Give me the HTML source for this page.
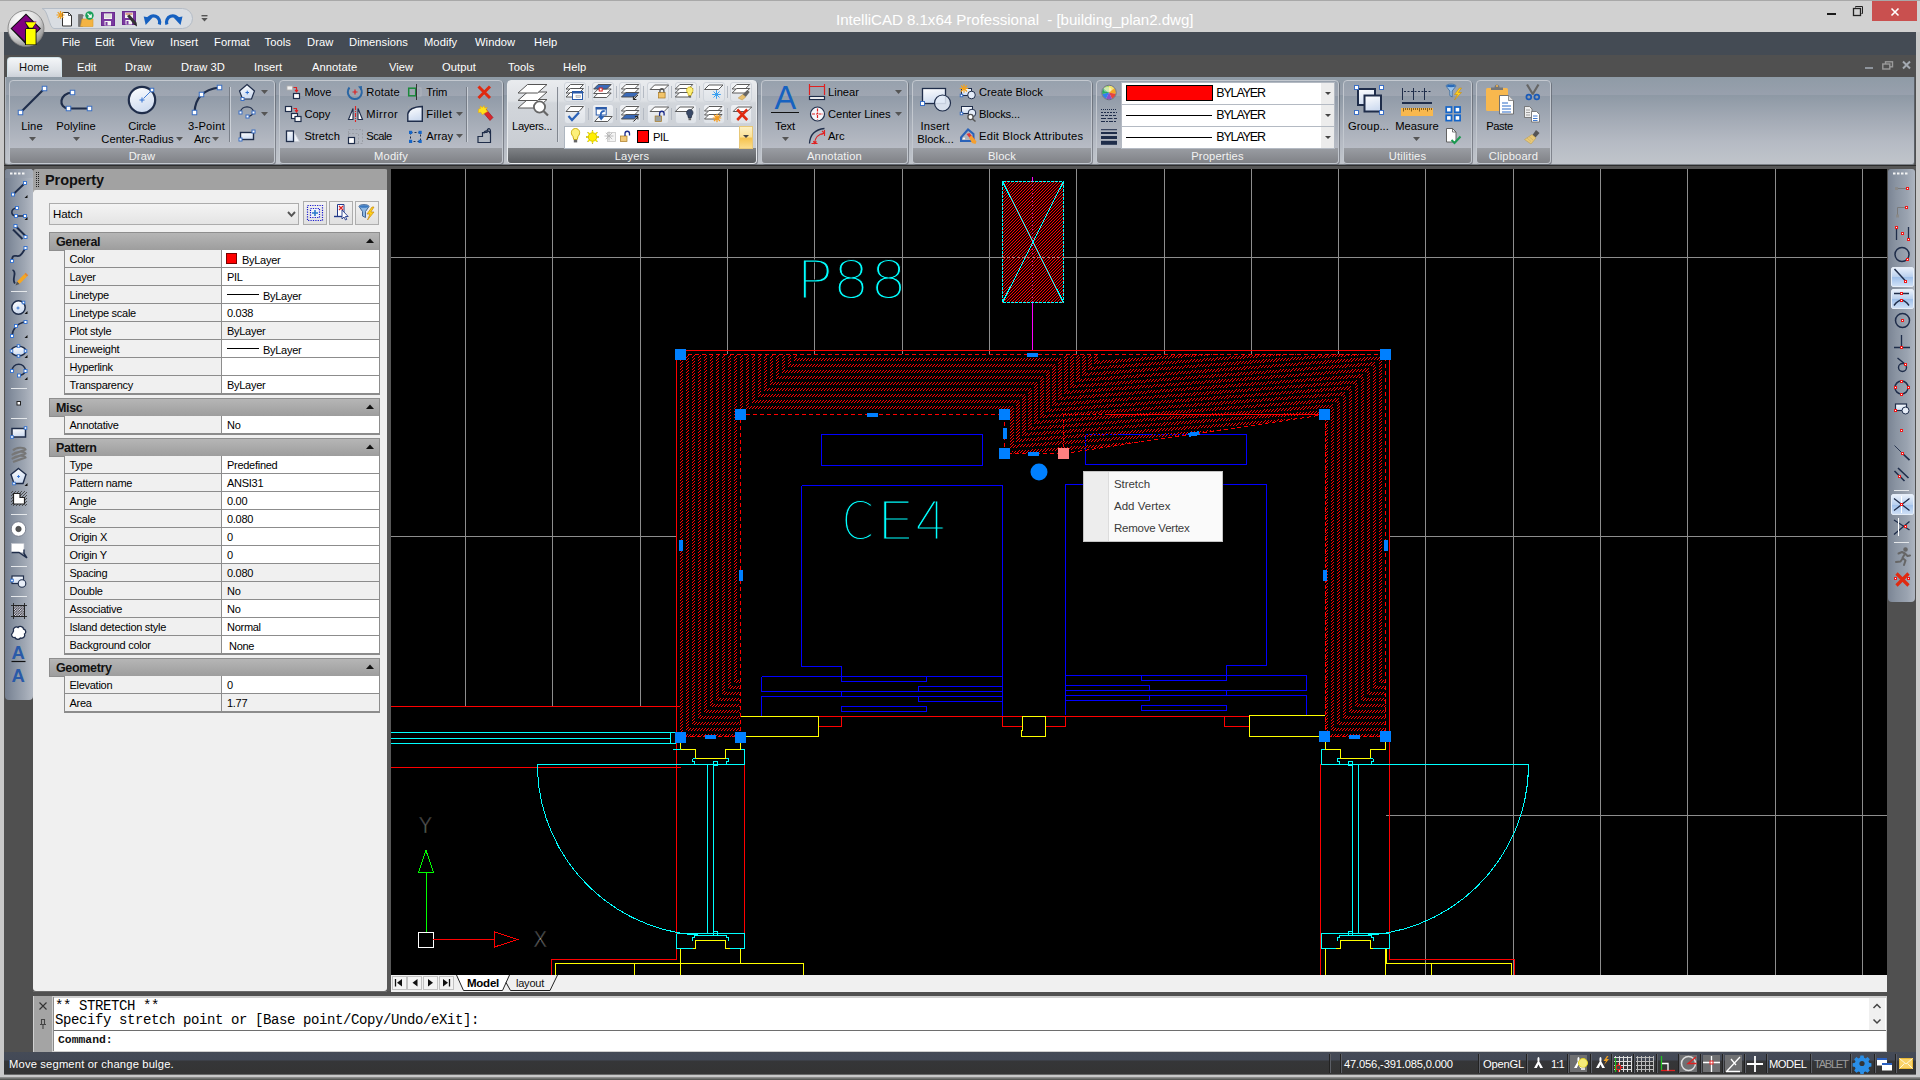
<!DOCTYPE html>
<html><head><meta charset="utf-8"><title>IntelliCAD</title>
<style>
html,body{margin:0;padding:0;background:#505050;overflow:hidden}
body{width:1920px;height:1080px;position:relative;font-family:"Liberation Sans",sans-serif;font-size:12px;color:#000}
div{position:absolute;box-sizing:border-box}
svg{position:absolute;overflow:visible}
.t{white-space:nowrap;line-height:14px;height:14px}
.w{color:#fff}
.mono{font-family:"Liberation Mono",monospace}
.mi{font-size:11.2px;letter-spacing:0.05px}
.cmd{font-family:"Liberation Mono",monospace;font-size:14px;letter-spacing:-0.4px;line-height:15px;height:15px;color:#000;white-space:pre}
</style></head>
<body>
<div style="left:0px;top:0px;width:1920px;height:1080px;background:#c9c9c9"></div>
<div style="left:0px;top:1077px;width:1920px;height:3px;background:linear-gradient(#9a9a9a,#4a4c48)"></div>
<div style="left:4px;top:165px;width:1912px;height:887px;background:#505050"></div>
<div style="left:0px;top:0px;width:1920px;height:32px;background:#d1d1d1"></div>
<div style="left:0px;top:0px;width:1920px;height:1px;background:#a8a8a8"></div>
<div class="t" style="left:836px;top:11.5px;color:#fff;font-size:15.1px;line-height:16px;height:16px;letter-spacing:-0.03px">IntelliCAD 8.1x64 Professional&nbsp; - [building_plan2.dwg]</div>
<div style="left:1827px;top:13px;width:9px;height:2px;background:#1a1a1a"></div>
<svg style="left:1852px;top:5px" width="12" height="12" viewBox="0 0 12 12"><path d="M3.5 2.5V1.5H10.5V8.5H9.5" fill="none" stroke="#222" stroke-width="1"/><rect x="1.5" y="3.5" width="7" height="7" fill="none" stroke="#222" stroke-width="1.3"/></svg>
<div style="left:1872px;top:1px;width:45px;height:20px;background:#c9504f"></div>
<svg style="left:1891px;top:7.500px" width="8" height="8" viewBox="0 0 8 8"><path d="M0.500 0.500L7.500 7.500M7.500 0.500L0.500 7.500" stroke="#fff" stroke-width="1.600"/></svg>
<div style="left:4px;top:32px;width:1912px;height:23px;background:#444b54"></div>
<div class="t mi" style="left:62px;top:35px;color:#fff;">File</div>
<div class="t mi" style="left:95px;top:35px;color:#fff;">Edit</div>
<div class="t mi" style="left:130px;top:35px;color:#fff;">View</div>
<div class="t mi" style="left:170px;top:35px;color:#fff;">Insert</div>
<div class="t mi" style="left:214px;top:35px;color:#fff;">Format</div>
<div class="t mi" style="left:264.5px;top:35px;color:#fff;">Tools</div>
<div class="t mi" style="left:307px;top:35px;color:#fff;">Draw</div>
<div class="t mi" style="left:349px;top:35px;color:#fff;">Dimensions</div>
<div class="t mi" style="left:424px;top:35px;color:#fff;">Modify</div>
<div class="t mi" style="left:475px;top:35px;color:#fff;">Window</div>
<div class="t mi" style="left:534px;top:35px;color:#fff;">Help</div>
<div style="left:4px;top:55px;width:1912px;height:22px;background:#505050"></div>
<div style="left:7px;top:57px;width:55px;height:21px;background:linear-gradient(#f4f6f8,#dfe3e8 60%,#c9ced6);border-radius:4px 4px 0 0;border:1px solid #cfe0e6;border-bottom:none"></div>
<div class="t mi" style="left:19px;top:60px;color:#111">Home</div>
<div class="t mi" style="left:77px;top:60px;color:#fff">Edit</div>
<div class="t mi" style="left:125px;top:60px;color:#fff">Draw</div>
<div class="t mi" style="left:181px;top:60px;color:#fff">Draw 3D</div>
<div class="t mi" style="left:254px;top:60px;color:#fff">Insert</div>
<div class="t mi" style="left:312px;top:60px;color:#fff">Annotate</div>
<div class="t mi" style="left:389px;top:60px;color:#fff">View</div>
<div class="t mi" style="left:442px;top:60px;color:#fff">Output</div>
<div class="t mi" style="left:508px;top:60px;color:#fff">Tools</div>
<div class="t mi" style="left:563px;top:60px;color:#fff">Help</div>
<div style="left:1865px;top:67px;width:8px;height:2px;background:#8e949c"></div>
<svg style="left:1882px;top:61px" width="12" height="10" viewBox="0 0 12 10"><rect x="3.5" y="0.8" width="7" height="5" fill="none" stroke="#9a9a9a" stroke-width="1.4"/><rect x="0.8" y="3" width="7" height="5" fill="#505050" stroke="#9a9a9a" stroke-width="1.4"/></svg>
<svg style="left:1902px;top:61px" width="9" height="8" viewBox="0 0 9 8"><path d="M1 0.500L8 7.500M8 0.500L1 7.500" stroke="#a4aab2" stroke-width="2"/></svg>
<svg style="left:40px;top:6px" width="170" height="26" viewBox="0 0 170 26"><path d="M2 2.5 H142.500 a10 10 0 0 1 0 20 H14 C9 22.500 8 3 2 2.500Z" fill="#d9dde2" stroke="#b4bcc6" stroke-width="1"/></svg>
<svg style="left:201px;top:15px" width="8" height="8" viewBox="0 0 8 8"><rect x="0.500" y="0" width="6" height="1.4" fill="#555"/><path d="M0.3 3H6.7L3.5 6.500Z" fill="#555"/></svg>
<svg style="left:54px;top:9px" width="140" height="20" viewBox="0 0 140 20">
<!-- new -->
<path d="M8.5 3.500h6l3 3v10.500h-9z" fill="#fff" stroke="#333" stroke-width="1"/><path d="M14.500 3.500v3h3" fill="none" stroke="#333" stroke-width="0.800"/>
<path d="M6.500 2v8M2.500 6h8M3.700 3.200l5.600 5.600M9.300 3.200l-5.600 5.600" stroke="#f0a020" stroke-width="1.200"/>
<!-- open -->
<path d="M24.500 17.500v-12h4l1 1.500h-1v10.500z" fill="#777" stroke="#666" stroke-width="0.6"/><path d="M26.500 17.500l1.500-7.500h11v7.500z" fill="#f4b443" stroke="#d89a28" stroke-width="0.600"/>
<circle cx="35.500" cy="6.500" r="4.200" fill="#19a05a"/><path d="M33.500 4.500l3.500 3.500M37.200 5.200v3h-3" stroke="#fff" stroke-width="1.200" fill="none"/>
<!-- save -->
<rect x="47.500" y="3.500" width="13" height="13" fill="#7a3aa0" stroke="#6a2a90" stroke-width="1"/><rect x="50" y="4.500" width="8" height="5.500" fill="#f4f4f4"/><path d="M50.500 6h7M50.500 8h7" stroke="#bbb" stroke-width="0.800"/><rect x="50.500" y="12" width="6.500" height="4.500" fill="#f4f4f4"/><rect x="51.500" y="13" width="2" height="3.500" fill="#7a3aa0"/>
<!-- save as -->
<rect x="68.500" y="2.500" width="13" height="13" fill="#7a3aa0" stroke="#6a2a90" stroke-width="1"/><rect x="71" y="3.500" width="8" height="5.500" fill="#f4f4f4"/><path d="M71.500 5h7" stroke="#c0502a" stroke-width="1"/><rect x="71.500" y="11" width="6.500" height="4.500" fill="#f4f4f4"/><rect x="72.500" y="12" width="2" height="3.500" fill="#7a3aa0"/>
<path d="M73 7l7 8.500 2.500-2-7-8z" fill="#333"/><path d="M80 15.500l3 2-0.500-4z" fill="#222"/>
<!-- undo -->
<path d="M105.300 15.500A6.300 6.300 0 0 0 93.500 11" fill="none" stroke="#1560c0" stroke-width="3.200"/><path d="M89.700 7.500l8.500 1.500-6.500 7z" fill="#1560c0"/>
<!-- redo -->
<path d="M112.900 15.500A6.300 6.300 0 0 1 124.700 11" fill="none" stroke="#1560c0" stroke-width="3.200"/><path d="M128.500 7.500l-8.500 1.500 6.500 7z" fill="#1560c0"/>
</svg>
<svg style="left:6px;top:8px" width="40" height="40" viewBox="0 0 40 40">
<defs><radialGradient id="lg" cx="0.35" cy="0.25" r="0.9"><stop offset="0" stop-color="#ffffff"/><stop offset="0.55" stop-color="#d8d8d8"/><stop offset="1" stop-color="#6c6c6c"/></radialGradient></defs>
<circle cx="20" cy="20.500" r="18" fill="url(#lg)" stroke="#7a7a7a" stroke-width="0.800"/>
<path d="M20 5.500L35 20.500L30.500 25V37H19V35.500L4.500 20.500Z" fill="#111"/>
<path d="M20 7L33.500 20.500L30.500 23.500V20.500H27L30.500 13.500H18.500L21.500 19.500L19 21V33L6 20.500Z" fill="#800080"/>
<path d="M19.500 14.200h10.800l-3.800 5.600h-3.200z" fill="#ffff00"/><rect x="20" y="21" width="9.600" height="15.400" fill="#ffff00"/>
</svg>
<div style="left:4px;top:77px;width:1912px;height:89px;background:#505050"></div>
<div style="left:5px;top:77px;width:1910px;height:88px;background:linear-gradient(#8f9ba6 0,#98a0ad 17.500px,#8e99a5 18.500px,#a3aab5 42px,#b6bbc4 66px,#c1c5cb 88px);border:0;border-right:1px solid #5c6168;border-bottom:1px solid #7c8188;border-left:1px solid #aeb4bc;border-radius:0 0 3px 3px"></div>
<div style="left:4px;top:165px;width:1912px;height:1px;background:#2c2c2c"></div>
<div style="left:4px;top:166px;width:1912px;height:3px;background:#565656"></div>
<div style="left:9px;top:80px;width:266px;height:84px;background:linear-gradient(#97a1ad 0,#9fa6b2 14.500px,#919ba8 15.500px,#a4abb6 40px,#b8bcc5 67px);border:1px solid #c3c8cf;border-radius:4px;box-shadow:1px 1px 0 rgba(80,84,92,0.55)"></div>
<div style="left:10px;top:148px;width:264px;height:15px;background:linear-gradient(#9a9da3,#808287);border-radius:0 0 3px 3px"></div>
<div class="t" style="left:128.63px;top:149px;font-size:11.2px;letter-spacing:0.150px;color:#f2f2f2;line-height:14px;height:14px;">Draw</div>
<div style="left:279px;top:80px;width:224px;height:84px;background:linear-gradient(#97a1ad 0,#9fa6b2 14.500px,#919ba8 15.500px,#a4abb6 40px,#b8bcc5 67px);border:1px solid #c3c8cf;border-radius:4px;box-shadow:1px 1px 0 rgba(80,84,92,0.55)"></div>
<div style="left:280px;top:148px;width:222px;height:15px;background:linear-gradient(#9a9da3,#808287);border-radius:0 0 3px 3px"></div>
<div class="t" style="left:374.06px;top:149px;font-size:11.2px;letter-spacing:0.150px;color:#f2f2f2;line-height:14px;height:14px;">Modify</div>
<div style="left:507px;top:80px;width:250px;height:84px;background:linear-gradient(#e9ebee 0,#dde0e4 20px,#d2d6db 22px,#c9cdd3 66px);border:1px solid #e8ebee;border-radius:4px;box-shadow:1px 1px 0 rgba(80,84,92,0.55)"></div>
<div style="left:508px;top:148px;width:248px;height:15px;background:linear-gradient(#808387,#595c60);border-radius:0 0 3px 3px"></div>
<div class="t" style="left:614.74px;top:149px;font-size:11.2px;letter-spacing:0.150px;color:#f2f2f2;line-height:14px;height:14px;">Layers</div>
<div style="left:761px;top:80px;width:147px;height:84px;background:linear-gradient(#97a1ad 0,#9fa6b2 14.500px,#919ba8 15.500px,#a4abb6 40px,#b8bcc5 67px);border:1px solid #c3c8cf;border-radius:4px;box-shadow:1px 1px 0 rgba(80,84,92,0.55)"></div>
<div style="left:762px;top:148px;width:145px;height:15px;background:linear-gradient(#9a9da3,#808287);border-radius:0 0 3px 3px"></div>
<div class="t" style="left:806.97px;top:149px;font-size:11.2px;letter-spacing:0.150px;color:#f2f2f2;line-height:14px;height:14px;">Annotation</div>
<div style="left:912px;top:80px;width:180px;height:84px;background:linear-gradient(#97a1ad 0,#9fa6b2 14.500px,#919ba8 15.500px,#a4abb6 40px,#b8bcc5 67px);border:1px solid #c3c8cf;border-radius:4px;box-shadow:1px 1px 0 rgba(80,84,92,0.55)"></div>
<div style="left:913px;top:148px;width:178px;height:15px;background:linear-gradient(#9a9da3,#808287);border-radius:0 0 3px 3px"></div>
<div class="t" style="left:987.93px;top:149px;font-size:11.2px;letter-spacing:0.150px;color:#f2f2f2;line-height:14px;height:14px;">Block</div>
<div style="left:1096px;top:80px;width:243px;height:84px;background:linear-gradient(#97a1ad 0,#9fa6b2 14.500px,#919ba8 15.500px,#a4abb6 40px,#b8bcc5 67px);border:1px solid #c3c8cf;border-radius:4px;box-shadow:1px 1px 0 rgba(80,84,92,0.55)"></div>
<div style="left:1097px;top:148px;width:241px;height:15px;background:linear-gradient(#9a9da3,#808287);border-radius:0 0 3px 3px"></div>
<div class="t" style="left:1191.23px;top:149px;font-size:11.2px;letter-spacing:0.150px;color:#f2f2f2;line-height:14px;height:14px;">Properties</div>
<div style="left:1343px;top:80px;width:129px;height:84px;background:linear-gradient(#97a1ad 0,#9fa6b2 14.500px,#919ba8 15.500px,#a4abb6 40px,#b8bcc5 67px);border:1px solid #c3c8cf;border-radius:4px;box-shadow:1px 1px 0 rgba(80,84,92,0.55)"></div>
<div style="left:1344px;top:148px;width:127px;height:15px;background:linear-gradient(#9a9da3,#808287);border-radius:0 0 3px 3px"></div>
<div class="t" style="left:1388.78px;top:149px;font-size:11.2px;letter-spacing:0.150px;color:#f2f2f2;line-height:14px;height:14px;">Utilities</div>
<div style="left:1476px;top:80px;width:75px;height:84px;background:linear-gradient(#97a1ad 0,#9fa6b2 14.500px,#919ba8 15.500px,#a4abb6 40px,#b8bcc5 67px);border:1px solid #c3c8cf;border-radius:4px;box-shadow:1px 1px 0 rgba(80,84,92,0.55)"></div>
<div style="left:1477px;top:148px;width:73px;height:15px;background:linear-gradient(#9a9da3,#808287);border-radius:0 0 3px 3px"></div>
<div class="t" style="left:1488.85px;top:149px;font-size:11.2px;letter-spacing:0.150px;color:#f2f2f2;line-height:14px;height:14px;">Clipboard</div>
<div class="t" style="left:21.25px;top:119px;font-size:11.2px;letter-spacing:0.081px;color:#000;line-height:14px;height:14px;">Line</div>
<svg style="left:28.5px;top:137px" width="7" height="4" viewBox="0 0 7 4"><path d="M0 0H7L3.5 4Z" fill="#555"/></svg>
<div class="t" style="left:56.25px;top:119px;font-size:11.2px;letter-spacing:0.035px;color:#000;line-height:14px;height:14px;">Polyline</div>
<svg style="left:72.5px;top:137px" width="7" height="4" viewBox="0 0 7 4"><path d="M0 0H7L3.5 4Z" fill="#555"/></svg>
<div class="t" style="left:128.25px;top:119px;font-size:11.2px;letter-spacing:-0.187px;color:#000;line-height:14px;height:14px;">Circle</div>
<div class="t" style="left:101.30px;top:132px;font-size:11.2px;letter-spacing:0.014px;color:#000;line-height:14px;height:14px;">Center-Radius</div>
<svg style="left:176.0px;top:137px" width="7" height="4" viewBox="0 0 7 4"><path d="M0 0H7L3.5 4Z" fill="#555"/></svg>
<div class="t" style="left:188.00px;top:119px;font-size:11.2px;letter-spacing:0.216px;color:#000;line-height:14px;height:14px;">3-Point</div>
<div class="t" style="left:194.00px;top:132px;font-size:11.2px;letter-spacing:-0.267px;color:#000;line-height:14px;height:14px;">Arc</div>
<svg style="left:212.0px;top:137px" width="7" height="4" viewBox="0 0 7 4"><path d="M0 0H7L3.5 4Z" fill="#555"/></svg>
<div style="left:229px;top:87px;width:2px;height:55px;background:linear-gradient(90deg,rgba(110,116,126,0.8) 50%,rgba(220,224,230,0.7) 50%)"></div>
<svg style="left:261.0px;top:90px" width="7" height="4" viewBox="0 0 7 4"><path d="M0 0H7L3.5 4Z" fill="#555"/></svg>
<svg style="left:261.0px;top:112px" width="7" height="4" viewBox="0 0 7 4"><path d="M0 0H7L3.5 4Z" fill="#555"/></svg>
<div class="t" style="left:304.40px;top:85px;font-size:11.2px;letter-spacing:-0.097px;color:#000;line-height:14px;height:14px;">Move</div>
<div class="t" style="left:304.40px;top:107px;font-size:11.2px;letter-spacing:-0.037px;color:#000;line-height:14px;height:14px;">Copy</div>
<div class="t" style="left:304.40px;top:129px;font-size:11.2px;letter-spacing:0.003px;color:#000;line-height:14px;height:14px;">Stretch</div>
<div class="t" style="left:366.30px;top:85px;font-size:11.2px;letter-spacing:0.084px;color:#000;line-height:14px;height:14px;">Rotate</div>
<div class="t" style="left:366.30px;top:107px;font-size:11.2px;letter-spacing:0.460px;color:#000;line-height:14px;height:14px;">Mirror</div>
<div class="t" style="left:366.30px;top:129px;font-size:11.2px;letter-spacing:-0.503px;color:#000;line-height:14px;height:14px;">Scale</div>
<div class="t" style="left:426.20px;top:85px;font-size:11.2px;letter-spacing:-0.294px;color:#000;line-height:14px;height:14px;">Trim</div>
<div class="t" style="left:426.20px;top:107px;font-size:11.2px;letter-spacing:0.392px;color:#000;line-height:14px;height:14px;">Fillet</div>
<div class="t" style="left:426.20px;top:129px;font-size:11.2px;letter-spacing:0.048px;color:#000;line-height:14px;height:14px;">Array</div>
<svg style="left:456.0px;top:112px" width="7" height="4" viewBox="0 0 7 4"><path d="M0 0H7L3.5 4Z" fill="#555"/></svg>
<svg style="left:456.0px;top:134px" width="7" height="4" viewBox="0 0 7 4"><path d="M0 0H7L3.5 4Z" fill="#555"/></svg>
<div style="left:466px;top:87px;width:2px;height:55px;background:linear-gradient(90deg,rgba(110,116,126,0.8) 50%,rgba(220,224,230,0.7) 50%)"></div>
<div class="t" style="left:512.00px;top:119px;font-size:11.2px;letter-spacing:-0.328px;color:#000;line-height:14px;height:14px;">Layers...</div>
<div style="left:557px;top:87px;width:2px;height:55px;background:linear-gradient(90deg,rgba(110,116,126,0.8) 50%,rgba(220,224,230,0.7) 50%)"></div>
<div style="left:564.0px;top:82px;width:22px;height:19.5px;background:linear-gradient(#eef0f3,#dfe3e8);border:1px solid #cfd4db;border-radius:3px"></div>
<div style="left:591.7px;top:82px;width:22px;height:19.5px;background:linear-gradient(#eef0f3,#dfe3e8);border:1px solid #cfd4db;border-radius:3px"></div>
<div style="left:619.4px;top:82px;width:22px;height:19.5px;background:linear-gradient(#eef0f3,#dfe3e8);border:1px solid #cfd4db;border-radius:3px"></div>
<div style="left:647.1px;top:82px;width:22px;height:19.5px;background:linear-gradient(#eef0f3,#dfe3e8);border:1px solid #cfd4db;border-radius:3px"></div>
<div style="left:674.8px;top:82px;width:22px;height:19.5px;background:linear-gradient(#eef0f3,#dfe3e8);border:1px solid #cfd4db;border-radius:3px"></div>
<div style="left:702.5px;top:82px;width:22px;height:19.5px;background:linear-gradient(#eef0f3,#dfe3e8);border:1px solid #cfd4db;border-radius:3px"></div>
<div style="left:730.2px;top:82px;width:22px;height:19.5px;background:linear-gradient(#eef0f3,#dfe3e8);border:1px solid #cfd4db;border-radius:3px"></div>
<div style="left:588.0px;top:86px;width:1px;height:11.5px;background:#b4bac3"></div>
<div style="left:615.7px;top:86px;width:1px;height:11.5px;background:#b4bac3"></div>
<div style="left:643.4px;top:86px;width:1px;height:11.5px;background:#b4bac3"></div>
<div style="left:671.1px;top:86px;width:1px;height:11.5px;background:#b4bac3"></div>
<div style="left:698.8px;top:86px;width:1px;height:11.5px;background:#b4bac3"></div>
<div style="left:726.5px;top:86px;width:1px;height:11.5px;background:#b4bac3"></div>
<div style="left:564.0px;top:104px;width:22px;height:19.5px;background:linear-gradient(#eef0f3,#dfe3e8);border:1px solid #cfd4db;border-radius:3px"></div>
<div style="left:591.7px;top:104px;width:22px;height:19.5px;background:linear-gradient(#eef0f3,#dfe3e8);border:1px solid #cfd4db;border-radius:3px"></div>
<div style="left:619.4px;top:104px;width:22px;height:19.5px;background:linear-gradient(#eef0f3,#dfe3e8);border:1px solid #cfd4db;border-radius:3px"></div>
<div style="left:647.1px;top:104px;width:22px;height:19.5px;background:linear-gradient(#eef0f3,#dfe3e8);border:1px solid #cfd4db;border-radius:3px"></div>
<div style="left:674.8px;top:104px;width:22px;height:19.5px;background:linear-gradient(#eef0f3,#dfe3e8);border:1px solid #cfd4db;border-radius:3px"></div>
<div style="left:702.5px;top:104px;width:22px;height:19.5px;background:linear-gradient(#eef0f3,#dfe3e8);border:1px solid #cfd4db;border-radius:3px"></div>
<div style="left:730.2px;top:104px;width:22px;height:19.5px;background:linear-gradient(#eef0f3,#dfe3e8);border:1px solid #cfd4db;border-radius:3px"></div>
<div style="left:588.0px;top:108px;width:1px;height:11.5px;background:#b4bac3"></div>
<div style="left:615.7px;top:108px;width:1px;height:11.5px;background:#b4bac3"></div>
<div style="left:643.4px;top:108px;width:1px;height:11.5px;background:#b4bac3"></div>
<div style="left:671.1px;top:108px;width:1px;height:11.5px;background:#b4bac3"></div>
<div style="left:698.8px;top:108px;width:1px;height:11.5px;background:#b4bac3"></div>
<div style="left:726.5px;top:108px;width:1px;height:11.5px;background:#b4bac3"></div>
<div style="left:564px;top:125.5px;width:189px;height:23px;background:#fff;border:1px solid #aeb6c0"></div>
<div style="left:739px;top:125.5px;width:14px;height:23px;background:linear-gradient(#fdf1c4,#fbe29a 45%,#f5c451 55%,#fbdc8c);border:1px solid #e8c878"></div>
<svg style="left:743px;top:135px" width="6" height="3" viewBox="0 0 6 3"><path d="M0 0H6L3 3Z" fill="#444"/></svg>
<div style="left:637px;top:130px;width:12px;height:12.5px;background:#f00;border:1px solid #000"></div>
<div class="t" style="left:653.00px;top:130px;font-size:11.2px;letter-spacing:-0.437px;color:#000;line-height:14px;height:14px;">PIL</div>
<div class="t" style="left:775.00px;top:119px;font-size:11.2px;letter-spacing:-0.135px;color:#000;line-height:14px;height:14px;">Text</div>
<svg style="left:781.5px;top:137px" width="7" height="4" viewBox="0 0 7 4"><path d="M0 0H7L3.5 4Z" fill="#555"/></svg>
<div style="left:771px;top:112px;width:28px;height:1px;background:#111"></div>
<div class="t" style="left:828.00px;top:85px;font-size:11.2px;letter-spacing:-0.023px;color:#000;line-height:14px;height:14px;">Linear</div>
<div class="t" style="left:828.00px;top:107px;font-size:11.2px;letter-spacing:-0.075px;color:#000;line-height:14px;height:14px;">Center Lines</div>
<div class="t" style="left:828.00px;top:129px;font-size:11.2px;letter-spacing:-0.100px;color:#000;line-height:14px;height:14px;">Arc</div>
<svg style="left:895.0px;top:90px" width="7" height="4" viewBox="0 0 7 4"><path d="M0 0H7L3.5 4Z" fill="#555"/></svg>
<svg style="left:895.0px;top:112px" width="7" height="4" viewBox="0 0 7 4"><path d="M0 0H7L3.5 4Z" fill="#555"/></svg>
<div class="t" style="left:920.50px;top:119px;font-size:11.2px;letter-spacing:0.165px;color:#000;line-height:14px;height:14px;">Insert</div>
<div class="t" style="left:917.25px;top:132px;font-size:11.2px;letter-spacing:-0.028px;color:#000;line-height:14px;height:14px;">Block...</div>
<div class="t" style="left:979.00px;top:85px;font-size:11.2px;letter-spacing:-0.010px;color:#000;line-height:14px;height:14px;">Create Block</div>
<div class="t" style="left:979.00px;top:107px;font-size:11.2px;letter-spacing:-0.147px;color:#000;line-height:14px;height:14px;">Blocks...</div>
<div class="t" style="left:979.00px;top:129px;font-size:11.2px;letter-spacing:0.233px;color:#000;line-height:14px;height:14px;">Edit Block Attributes</div>
<div style="left:1120.5px;top:82px;width:214.5px;height:22.5px;background:#fff;border:1px solid #b4bac3"></div>
<div style="left:1321px;top:83px;width:13px;height:20.5px;background:#ececec"></div>
<svg style="left:1325px;top:92px" width="6" height="3" viewBox="0 0 6 3"><path d="M0 0H6L3 3Z" fill="#444"/></svg>
<div class="t" style="left:1216.30px;top:85px;font-size:12.5px;letter-spacing:-1.177px;color:#000;line-height:16px;height:16px;">BYLAYER</div>
<div style="left:1120.5px;top:104px;width:214.5px;height:22.5px;background:#fff;border:1px solid #b4bac3"></div>
<div style="left:1321px;top:105px;width:13px;height:20.5px;background:#ececec"></div>
<svg style="left:1325px;top:114px" width="6" height="3" viewBox="0 0 6 3"><path d="M0 0H6L3 3Z" fill="#444"/></svg>
<div class="t" style="left:1216.30px;top:107px;font-size:12.5px;letter-spacing:-1.177px;color:#000;line-height:16px;height:16px;">BYLAYER</div>
<div style="left:1120.5px;top:126px;width:214.5px;height:22.5px;background:#fff;border:1px solid #b4bac3"></div>
<div style="left:1321px;top:127px;width:13px;height:20.5px;background:#ececec"></div>
<svg style="left:1325px;top:136px" width="6" height="3" viewBox="0 0 6 3"><path d="M0 0H6L3 3Z" fill="#444"/></svg>
<div class="t" style="left:1216.30px;top:129px;font-size:12.5px;letter-spacing:-1.177px;color:#000;line-height:16px;height:16px;">BYLAYER</div>
<div style="left:1126px;top:85px;width:86.5px;height:16px;background:#f00;border:1.500px solid #000"></div>
<div style="left:1126px;top:114.5px;width:86px;height:1.5px;background:#000"></div>
<div style="left:1126px;top:136.5px;width:86px;height:1.5px;background:#000"></div>
<div class="t" style="left:1348.00px;top:119px;font-size:11.2px;letter-spacing:0.067px;color:#000;line-height:14px;height:14px;">Group...</div>
<div class="t" style="left:1395.25px;top:119px;font-size:11.2px;letter-spacing:-0.011px;color:#000;line-height:14px;height:14px;">Measure</div>
<svg style="left:1413.0px;top:137px" width="7" height="4" viewBox="0 0 7 4"><path d="M0 0H7L3.5 4Z" fill="#555"/></svg>
<div class="t" style="left:1486.25px;top:119px;font-size:11.2px;letter-spacing:-0.428px;color:#000;line-height:14px;height:14px;">Paste</div>
<svg style="left:0;top:77px" width="520" height="90" viewBox="0 77 520 90"><defs><linearGradient id="wb" x1="0" y1="0" x2="0.3" y2="1"><stop offset="0" stop-color="#ffffff"/><stop offset="1" stop-color="#cfdcf0"/></linearGradient></defs><path d="M20.500 112.500L44.500 88.500" stroke="#1f2d4a" stroke-width="2.200"/><rect x="18.25" y="110.25" width="4.5" height="4.5" fill="#fff" stroke="#3b6fc4" stroke-width="1"/><rect x="42.25" y="86.25" width="4.5" height="4.5" fill="#fff" stroke="#3b6fc4" stroke-width="1"/><path d="M72.500 92.500C59 93 58 108 68.500 108.500H89.500" fill="none" stroke="#1f2d4a" stroke-width="2.200"/><rect x="70.25" y="90.25" width="4.5" height="4.5" fill="#fff" stroke="#3b6fc4" stroke-width="1"/><rect x="66.25" y="106.25" width="4.5" height="4.5" fill="#fff" stroke="#3b6fc4" stroke-width="1"/><rect x="87.25" y="106.25" width="4.5" height="4.5" fill="#fff" stroke="#3b6fc4" stroke-width="1"/><circle cx="142" cy="100" r="13.200" fill="url(#wb)" stroke="#1f2d4a" stroke-width="2.200"/><path d="M139.500 100h5M142 97.500v5" stroke="#2f6fd0" stroke-width="1"/><path d="M143.500 98.500L151 91" stroke="#2f6fd0" stroke-width="0.900"/><rect x="150.25" y="88.25" width="3.5" height="3.5" fill="#fff" stroke="#3b6fc4" stroke-width="1"/><path d="M194.500 112.500C195 98 203 89.500 219.500 87.500" fill="none" stroke="#1f2d4a" stroke-width="2.200"/><rect x="192.25" y="110.25" width="4.5" height="4.5" fill="#fff" stroke="#3b6fc4" stroke-width="1"/><rect x="199.25" y="92.25" width="4.5" height="4.5" fill="#fff" stroke="#3b6fc4" stroke-width="1"/><rect x="217.25" y="85.25" width="4.5" height="4.5" fill="#fff" stroke="#3b6fc4" stroke-width="1"/><path d="M247 84.500L254.500 91L251.500 99H242.500L239.500 91Z" fill="url(#wb)" stroke="#1f2d4a" stroke-width="1.200"/><path d="M245.500 92.500h3.500M247.250 90.700v3.600" stroke="#2f6fd0" stroke-width="1"/><rect x="241.0" y="97.5" width="3" height="3" fill="#fff" stroke="#3b6fc4" stroke-width="1"/><path d="M240.500 112.500C241 105 253 105 253.500 112.500Q252 116 247.500 116.500" fill="none" stroke="#1f2d4a" stroke-width="1.200"/><rect x="239.0" y="111.0" width="3" height="3" fill="#fff" stroke="#3b6fc4" stroke-width="1"/><rect x="252.0" y="111.0" width="3" height="3" fill="#fff" stroke="#3b6fc4" stroke-width="1"/><rect x="246.0" y="115.0" width="3" height="3" fill="#fff" stroke="#3b6fc4" stroke-width="1"/><rect x="240.500" y="132.500" width="13" height="7" fill="url(#wb)" stroke="#1f2d4a" stroke-width="1.400"/><rect x="252.0" y="130.0" width="3" height="3" fill="#fff" stroke="#3b6fc4" stroke-width="1"/><rect x="239.0" y="138.0" width="3" height="3" fill="#fff" stroke="#3b6fc4" stroke-width="1"/><rect x="287" y="86" width="5.500" height="4" fill="#f2f2f2" stroke="#b0b0b0" stroke-width="0.800"/><path d="M293.500 87.500h3v3.500M295 89.800l1.500 2 1.500-2" fill="none" stroke="#e02020" stroke-width="1.100"/><rect x="293.500" y="93.500" width="6" height="5" fill="#fff" stroke="#1f2d4a" stroke-width="1.200"/><rect x="285.500" y="106.500" width="6" height="5" fill="#fff" stroke="#1f2d4a" stroke-width="1.200"/><path d="M293.500 108.500h3v3M295 110l1.500 2 1.500-2" fill="none" stroke="#e02020" stroke-width="1.100"/><rect x="291.500" y="113.500" width="6" height="5" fill="#fff" stroke="#1f2d4a" stroke-width="1.200"/><rect x="295" y="116.500" width="6" height="5" fill="#fff" stroke="#1f2d4a" stroke-width="1.200"/><path d="M293.500 131L299.500 141.500H293.500Z" fill="#eef2f8" stroke="#c8ccd4" stroke-width="0.800"/><rect x="286.500" y="131" width="7" height="10.500" fill="url(#wb)" stroke="#1f2d4a" stroke-width="1.300"/><path d="M349.500 87.500A7 7 0 1 0 360.500 88" fill="none" stroke="#2a66a4" stroke-width="2"/><path d="M358 86.500l4-0.500-0.300 4.500z" fill="#2a66a4"/><path d="M352.500 92h5M355 89.500v5" stroke="#e02020" stroke-width="1.200"/><path d="M348.500 119.500L353 108.500V119.500Z" fill="#fff" stroke="#1f2d4a" stroke-width="1.100"/><path d="M362.500 119.500L358 108.500V119.500Z" fill="#fff" stroke="#1f2d4a" stroke-width="1.100"/><path d="M355.500 106V122" stroke="#e02020" stroke-width="1.100" stroke-dasharray="4 1 1 1"/><rect x="348.500" y="129.500" width="14" height="14" fill="none" stroke="#9a9ea6" stroke-width="1" stroke-dasharray="2 1.500"/><rect x="348.500" y="133.500" width="10" height="10" fill="none" stroke="#9a9ea6" stroke-width="1" stroke-dasharray="2 1.500"/><rect x="348.500" y="137.500" width="6" height="6" fill="#fff" stroke="#1f2d4a" stroke-width="1.200"/><rect x="417" y="88" width="4" height="8" fill="none" stroke="#b4b8c0" stroke-width="0.800"/><rect x="408.700" y="88.200" width="7" height="7.600" fill="none" stroke="#1a8a3a" stroke-width="1.500"/><path d="M416.500 84V100" stroke="#333" stroke-width="1"/><path d="M408 107h8" stroke="#aaa" stroke-width="0.800" stroke-dasharray="1 1"/><path d="M407.800 121.300V114Q409 107 422.300 106.500V121.300Z" fill="url(#wb)" stroke="#1f2d4a" stroke-width="1.400"/><path d="M410.500 132.500H420.500V141.500H410.500Z" fill="none" stroke="#1f2d4a" stroke-width="1" stroke-dasharray="2 2"/><rect x="409" y="130.8" width="3.200" height="3.200" fill="#1565c8"/><rect x="409" y="139.8" width="3.200" height="3.200" fill="#1565c8"/><rect x="418.5" y="130.8" width="3.200" height="3.200" fill="#1565c8"/><rect x="418.5" y="139.8" width="3.200" height="3.200" fill="#1565c8"/><path d="M478.500 86.500L490 98M490 86.500L478.500 98" stroke="#e02a10" stroke-width="3"/><path d="M482 111l3-3 8 9.500-3 3z" fill="#d8262c" stroke="#a01018" stroke-width="0.600"/><path d="M478.500 109l2-0.500-0.500-2.500 2.500 1.500 1.500-2 0.800 2.500 2.500-0.500-1.300 2.200 1.800 1.500-5.500 3.500-1.500-2.500-2.500 0.500z" fill="#ffe21a" stroke="#e8a010" stroke-width="0.500"/><path d="M478 142.500v-6h4.500v-4h4.500c0-5 3.500-5 3.500-1v11z" fill="#aeb6c2" fill-opacity="0.35" stroke="#1f2d4a" stroke-width="1.200"/><path d="M484 133.500c0-3.500 6-3.500 6 0" fill="none" stroke="#1f2d4a" stroke-width="1.200"/></svg>
<svg style="left:500px;top:77px" width="1060" height="90" viewBox="500 77 1060 90"><path d="M527.5 99.5H547.0L537.5 108.0H518Z" fill="#fff" stroke="#555" stroke-width="1"/><path d="M527.5 92H547.0L537.5 100.5H518Z" fill="#fff" stroke="#555" stroke-width="1"/><path d="M527.5 84.5H547.0L537.5 93.0H518Z" fill="#fff" stroke="#555" stroke-width="1"/><circle cx="539.500" cy="107" r="5.600" fill="#fff" stroke="#666" stroke-width="1.800"/><path d="M543.500 111l4.500 4.500" stroke="#666" stroke-width="2.200"/><path d="M570.5 84.5H583.5L579.0 89.0H566.0Z" fill="#fff" stroke="#4a4a4a" stroke-width="0.9"/><path d="M570.5 88.5H583.5L579.0 93.0H566.0Z" fill="#fff" stroke="#4a4a4a" stroke-width="0.9"/><path d="M570.5 92.5H583.5L579.0 97.0H566.0Z" fill="#fff" stroke="#4a4a4a" stroke-width="0.9"/><rect x="572.5" y="91.5" width="10" height="8" fill="#fff" stroke="#2a5aa8" stroke-width="1"/><rect x="572.0" y="91" width="11" height="2.500" fill="#2a5aa8"/><rect x="576.0" y="95.5" width="4.500" height="1.800" fill="#ddd" stroke="#999" stroke-width="0.500"/><path d="M598.2 93H611.2L606.7 97.5H593.7Z" fill="#fff" stroke="#4a4a4a" stroke-width="0.9"/><path d="M598.2 89H611.2L606.7 93.5H593.7Z" fill="#fff" stroke="#4a4a4a" stroke-width="0.9"/><path d="M598.2 84.5H611.2L606.7 89.0H593.7Z" fill="#3a6ab8" stroke="#4a4a4a" stroke-width="0.9"/><rect x="599.2" y="88" width="3" height="3" fill="#fff" stroke="#e02020" stroke-width="1"/><path d="M625.9 84.5H638.9L634.4 89.0H621.4Z" fill="#fff" stroke="#4a4a4a" stroke-width="0.9"/><path d="M625.9 88.5H638.9L634.4 93.0H621.4Z" fill="#fff" stroke="#4a4a4a" stroke-width="0.9"/><path d="M625.9 92.5H638.9L634.4 97.0H621.4Z" fill="#3a6ab8" stroke="#4a4a4a" stroke-width="0.9"/><path d="M637.9 95l-4.500 4.500M633.4 96.5v3h3" fill="none" stroke="#222" stroke-width="1"/><path d="M654.6 85H668.6L664.1 89.5H650.1Z" fill="#fff" stroke="#4a4a4a" stroke-width="0.9"/><rect x="658.6" y="92.5" width="6.500" height="5.500" fill="#f2c46a" stroke="#a87820" stroke-width="0.700"/><path d="M659.9 92.5v-1.500c0-3 4-3 4 0v1.500" fill="none" stroke="#555" stroke-width="1.300"/><path d="M679.8 84.5H692.8L688.3 89.0H675.3Z" fill="#fff" stroke="#4a4a4a" stroke-width="0.9"/><path d="M679.8 88.5H692.8L688.3 93.0H675.3Z" fill="#fff" stroke="#4a4a4a" stroke-width="0.9"/><path d="M679.8 92.5H692.8L688.3 97.0H675.3Z" fill="#fff" stroke="#4a4a4a" stroke-width="0.9"/><path d="M689.8 87c-3.200 0-4.200 3.800-2 6l0.700 2.500h2.600l0.700-2.500c2.200-2.200 1.200-6-2-6z" fill="#fdf07a" stroke="#c8a800" stroke-width="0.700"/><rect x="688.5" y="95.7" width="2.600" height="2" fill="#666"/><path d="M709.0 85H723.0L718.5 89.5H704.5Z" fill="#fff" stroke="#4a4a4a" stroke-width="0.9"/><path d="M712.2 94.5L720.8 94.5M713.5 91.5L719.5 97.5M716.5 90.2L716.5 98.8M719.5 91.5L713.5 97.5" stroke="#3aa0f0" stroke-width="1"/><path d="M736.7 84.5H749.7L745.2 89.0H732.2Z" fill="#fff" stroke="#4a4a4a" stroke-width="0.9"/><path d="M736.7 88.5H749.7L745.2 93.0H732.2Z" fill="#fff" stroke="#4a4a4a" stroke-width="0.9"/><path d="M747.2 90l2.500 2-4 5-3-2.500z" fill="#666"/><path d="M742.7 94.5l3 2.500-3.500 3-4-2z" fill="#e8c070" stroke="#b89040" stroke-width="0.500"/><path d="M570.5 106.5H583.5L579.0 111.5H566.0Z" fill="#fff" stroke="#4a4a4a" stroke-width="0.9"/><path d="M568.5 116l3.500 4 7-7.500" fill="none" stroke="#2a62b8" stroke-width="2.200"/><path d="M599.2 116.5H612.2L607.7 121.5H594.7Z" fill="#fff" stroke="#4a4a4a" stroke-width="0.9"/><rect x="596.2" y="107.5" width="10" height="7.500" fill="#fff" stroke="#2a5aa8" stroke-width="1"/><rect x="595.7" y="107" width="11" height="2.500" fill="#2a5aa8"/><path d="M604.7 111c-4 0-4.500 3-3.500 6.500M599.2 116l2 3 2.500-3" fill="none" stroke="#2a62b8" stroke-width="1.800"/><path d="M625.9 106.5H638.9L634.4 111.0H621.4Z" fill="#fff" stroke="#4a4a4a" stroke-width="0.9"/><path d="M625.9 110.5H638.9L634.4 115.0H621.4Z" fill="#fff" stroke="#4a4a4a" stroke-width="0.9"/><path d="M625.9 114.5H638.9L634.4 119.0H621.4Z" fill="#3a6ab8" stroke="#4a4a4a" stroke-width="0.9"/><path d="M633.4 121.5l4.500-4.500M634.9 116.5h3v3" fill="none" stroke="#222" stroke-width="1"/><path d="M654.6 107H668.6L664.1 111.5H650.1Z" fill="#fff" stroke="#4a4a4a" stroke-width="0.9"/><rect x="655.1" y="116" width="6.500" height="5.500" fill="#9aa0a0" stroke="#a87820" stroke-width="0.700"/><path d="M659.6 116v-2.500c0-3 4.500-3 4.500 0v2" fill="none" stroke="#1a2a8a" stroke-width="1.300"/><path d="M679.8 107H693.8L689.3 111.5H675.3Z" fill="#fff" stroke="#4a4a4a" stroke-width="0.9"/><path d="M689.8 109.5c-3.200 0-4.200 3.800-2 6l0.700 2.500h2.600l0.700-2.500c2.200-2.200 1.200-6-2-6z" fill="#3a4a68" stroke="#1a2438" stroke-width="0.700"/><rect x="688.5" y="118.2" width="2.600" height="2" fill="#666"/><path d="M709.0 106.5H722.0L717.5 111.0H704.5Z" fill="#fff" stroke="#4a4a4a" stroke-width="0.9"/><path d="M709.0 110.5H722.0L717.5 115.0H704.5Z" fill="#fff" stroke="#4a4a4a" stroke-width="0.9"/><path d="M709.0 114.5H722.0L717.5 119.0H704.5Z" fill="#fff" stroke="#4a4a4a" stroke-width="0.9"/><path d="M712.7 118.0L721.3 118.0M714.0 115.0L720.0 121.0M717.0 113.7L717.0 122.3M720.0 115.0L714.0 121.0" stroke="#f59a1a" stroke-width="1.2"/><path d="M737.7 107H751.7L747.2 111.5H733.2Z" fill="#fff" stroke="#4a4a4a" stroke-width="0.9"/><path d="M737.2 109.5l10 10.500M747.2 109.5l-10 10.500" stroke="#e02a10" stroke-width="2.600"/><g transform="translate(575.500 128.500) scale(1.300) translate(-575 -130.500)"><path d="M575 130.5c-3.200 0-4.200 3.800-2 6l0.700 2.500h2.600l0.700-2.500c2.200-2.200 1.200-6-2-6z" fill="#fdf07a" stroke="#c8a800" stroke-width="0.700"/><rect x="573.7" y="139.2" width="2.600" height="2" fill="#666"/></g><path d="M586.0 137.0L599.0 137.0M587.9 132.4L597.1 141.6M592.5 130.5L592.5 143.5M597.1 132.4L587.9 141.6" stroke="#111" stroke-width="1"/><circle cx="592.500" cy="137" r="4.300" fill="#ffee00" stroke="#c8b400" stroke-width="0.800"/><path d="M586.2 137.0L598.8 137.0M588.0 132.5L597.0 141.5M592.5 130.7L592.5 143.3M597.0 132.5L588.0 141.5" stroke="#ffee00" stroke-dasharray="2 8.600 2 0" stroke-width="1.6"/><rect x="607.500" y="132.500" width="8" height="9" fill="#f4f4f4" stroke="#c8c8c8" stroke-width="0.800"/><path d="M604.5 136.0L613.5 136.0M605.8 132.8L612.2 139.2M609.0 131.5L609.0 140.5M612.2 132.8L605.8 139.2" stroke="#b0b0b0" stroke-width="0.8"/><rect x="620.5" y="136" width="6.500" height="5.500" fill="#f0c878" stroke="#a87820" stroke-width="0.700"/><path d="M625.0 136v-2.500c0-3 4.500-3 4.500 0v2" fill="none" stroke="#1a2a8a" stroke-width="1.300"/><text x="785.300" y="109" font-family="Liberation Sans,sans-serif" font-size="32.500" fill="#1762c0" text-anchor="middle">A</text><path d="M809.500 84v11M824.500 84v11M809.500 86.500h15" stroke="#e02020" stroke-width="1.200" fill="none"/><rect x="809.500" y="96.500" width="15" height="3" fill="#fff" stroke="#1f2d4a" stroke-width="1.200"/><circle cx="817.500" cy="114" r="7" fill="#f4f7fb" stroke="#1f2d4a" stroke-width="1.200"/><path d="M812 114h11M817.500 108.500v11" stroke="#e02020" stroke-width="1.200" stroke-dasharray="3 1 1.500 1"/><path d="M809.500 143.500C810 135 815 129.500 824.500 128.500" fill="none" stroke="#1f2d4a" stroke-width="1.300"/><path d="M814.500 143.500C815 137.500 818 134 824.500 133M824.500 130v6M811.500 143.500h6M822 131l2.500 2-3 1.500M813.500 141l1 2.500 2-2" fill="none" stroke="#e02020" stroke-width="1.100"/><rect x="922.500" y="88.500" width="23" height="15" fill="url(#wb)" stroke="#1f2d4a" stroke-width="1.300"/><circle cx="942.500" cy="103" r="8" fill="#e4ecf8" fill-opacity="0.850" stroke="#1f2d4a" stroke-width="1.200"/><rect x="920.5" y="101.5" width="4" height="4" fill="#fff" stroke="#3b6fc4" stroke-width="1"/><rect x="961.500" y="88.500" width="10" height="7" fill="url(#wb)" stroke="#1f2d4a" stroke-width="1"/><circle cx="971.500" cy="95" r="3.800" fill="#e4ecf8" stroke="#1f2d4a" stroke-width="1"/><rect x="960.25" y="94.25" width="2.5" height="2.5" fill="#fff" stroke="#3b6fc4" stroke-width="1"/><path d="M959.8 88.5L968.2 88.5M961.0 85.5L967.0 91.5M964.0 84.3L964.0 92.7M967.0 85.5L961.0 91.5" stroke="#f5a21a" stroke-width="1.1"/><rect x="961.500" y="106.500" width="11" height="7" fill="url(#wb)" stroke="#1f2d4a" stroke-width="1"/><circle cx="972" cy="113" r="3.800" fill="#e4ecf8" stroke="#1f2d4a" stroke-width="1"/><rect x="960.25" y="112.25" width="2.5" height="2.5" fill="#fff" stroke="#3b6fc4" stroke-width="1"/><circle cx="970.500" cy="117" r="2.600" fill="#fff" stroke="#555" stroke-width="1.400"/><path d="M972.500 119l3 2.500" stroke="#555" stroke-width="1.600"/><path d="M961 137.500l7-8 5.500 4.500v7h-12.500z" fill="none" stroke="#2a62b8" stroke-width="2"/><circle cx="964" cy="138.500" r="1" fill="#fff"/><path d="M966.500 134l3-1 5.500 6.500-2.500 2.200z" fill="#e03a3a"/><path d="M969 137.500l2.500-2 5 6-1 2.500-3.500-1z" fill="#f5a030"/><circle cx="1109" cy="92.500" r="7.500" fill="#ccc"/><path d="M1109 92.500L1109.00 85.50A7 7 0 0 1 1114.47 88.14Z" fill="#f6e36a"/><path d="M1109 92.500L1114.47 88.14A7 7 0 0 1 1115.82 94.06Z" fill="#f5a623"/><path d="M1109 92.500L1115.82 94.06A7 7 0 0 1 1112.04 98.81Z" fill="#e8453c"/><path d="M1109 92.500L1112.04 98.81A7 7 0 0 1 1105.96 98.81Z" fill="#8e4ec6"/><path d="M1109 92.500L1105.96 98.81A7 7 0 0 1 1102.18 94.06Z" fill="#2f80ed"/><path d="M1109 92.500L1102.18 94.06A7 7 0 0 1 1103.53 88.14Z" fill="#27ae60"/><path d="M1109 92.500L1103.53 88.14A7 7 0 0 1 1109.00 85.50Z" fill="#a8d86a"/><circle cx="1109" cy="92.500" r="7.300" fill="none" stroke="#5a6270" stroke-width="0.800"/><ellipse cx="1107.500" cy="89.500" rx="4" ry="2.500" fill="#fff" fill-opacity="0.450"/><g stroke="#1f2d4a" stroke-width="1.100"><path d="M1101 109.500h16" stroke-dasharray="1 1"/><path d="M1101 112.500h16" stroke-dasharray="2 1"/><path d="M1101 115.500h16" stroke-dasharray="3 1"/><path d="M1101 118.500h16" stroke-dasharray="5 1.500"/><path d="M1101 121.500h16" stroke-dasharray="4 1 2 1"/></g><g stroke="#1f2d4a"><path d="M1101 129.700h16" stroke-width="1"/><path d="M1101 133h16" stroke-width="2"/><path d="M1101 137.500h16" stroke-width="3"/><path d="M1101 142.800h16" stroke-width="4"/></g><rect x="1358" y="89" width="17" height="16" fill="url(#wb)" stroke="#1f2d4a" stroke-width="2"/><rect x="1364.500" y="95.500" width="16.500" height="16" fill="url(#wb)" stroke="#1f2d4a" stroke-width="2"/><rect x="1354.5" y="85.5" width="4" height="4" fill="#fff" stroke="#3b6fc4" stroke-width="1"/><rect x="1379.5" y="85.5" width="4" height="4" fill="#fff" stroke="#3b6fc4" stroke-width="1"/><rect x="1354.5" y="110.5" width="4" height="4" fill="#fff" stroke="#3b6fc4" stroke-width="1"/><rect x="1379.5" y="110.5" width="4" height="4" fill="#fff" stroke="#3b6fc4" stroke-width="1"/><path d="M1402.500 88v12M1413.500 88v12M1424.500 88v12" stroke="#1f2d4a" stroke-width="1"/><path d="M1404 91.500h27" stroke="#1f2d4a" stroke-width="1" stroke-dasharray="2 1.500"/><path d="M1402 103h30" stroke="#1f2d4a" stroke-width="2"/><rect x="1401" y="108" width="32" height="8" fill="#f8b84e"/><path d="M1403.5 108v3.5M1405.5 108v2M1407.5 108v2M1409.5 108v2M1411.5 108v3.5M1413.5 108v2M1415.5 108v2M1417.5 108v2M1419.5 108v3.5M1421.5 108v2M1423.5 108v2M1425.5 108v2M1427.5 108v3.5M1429.5 108v2M1431.5 108v2" stroke="#6a4a10" stroke-width="0.800"/><path d="M1446 86c0-2.500 10-2.500 10 0l-3.800 5v6l-2.400-1.500v-4.500z" fill="#9cc4ea" stroke="#3a6a9c" stroke-width="0.800"/><ellipse cx="1451" cy="86" rx="4.300" ry="1.200" fill="#2a6ab8"/><path d="M1459.500 88l-5 6.500h3l-3 5.500 7-7.500h-3.200l3.200-4.500z" fill="#ffd21a" stroke="#c88a10" stroke-width="0.600"/><rect x="1446.2" y="107" width="5.300" height="5.300" fill="#fff" stroke="#1565c8" stroke-width="1.700"/><rect x="1446.2" y="115.3" width="5.300" height="5.300" fill="#fff" stroke="#1565c8" stroke-width="1.700"/><rect x="1454.8" y="107" width="5.300" height="5.300" fill="#fff" stroke="#1565c8" stroke-width="1.700"/><rect x="1454.8" y="115.3" width="5.300" height="5.300" fill="#fff" stroke="#1565c8" stroke-width="1.700"/><path d="M1446.500 128.500h6l3.500 3.500v10h-9.500z" fill="#fff" stroke="#555" stroke-width="0.900"/><path d="M1452.500 128.500v3.500h3.500" fill="none" stroke="#555" stroke-width="0.800"/><path d="M1451.500 140l3 3 6-6.500" fill="none" stroke="#1a9a50" stroke-width="2"/><rect x="1486" y="88" width="22" height="23" rx="1.500" fill="#f8b84e"/><path d="M1491 90v-2.500h3.500c0-4 5-4 5 0h3.500v2.500z" fill="#777"/><circle cx="1497" cy="86" r="1" fill="#f8b84e"/><path d="M1499.500 95.500h9l5 5v13.500h-14z" fill="#fff" stroke="#666" stroke-width="0.900"/><path d="M1508.500 95.500v5h5" fill="#ddd" stroke="#666" stroke-width="0.700"/><path d="M1502 103h6M1502 106h9M1502 109h9M1502 112h9" stroke="#2a6ac8" stroke-width="1.100"/><path d="M1527 84.500l6 10M1538.500 84.500l-6 10" stroke="#666" stroke-width="2.200"/><circle cx="1528.800" cy="97" r="2.400" fill="none" stroke="#1a5ab8" stroke-width="1.700"/><circle cx="1536.800" cy="97" r="2.400" fill="none" stroke="#1a5ab8" stroke-width="1.700"/><path d="M1524.500 106.500h5l2.500 2.500v8.500h-7.500z" fill="#eee" stroke="#666" stroke-width="0.800"/><path d="M1526 110h4M1526 112.500h4M1526 115h4" stroke="#888" stroke-width="0.800"/><path d="M1531.500 111.500h5l3 3v7.500h-8z" fill="#fff" stroke="#666" stroke-width="0.800"/><path d="M1533 116h4.500M1533 118.500h4.500M1533 120.500h4.500" stroke="#2a6ac8" stroke-width="0.900"/><path d="M1536 130l3.500 3-4 4.500-3-2.500z" fill="#555"/><path d="M1532 134.500l4 3.500-5 6-6.500-4.500z" fill="#e8c878" stroke="#b89848" stroke-width="0.500"/><path d="M1527 138l4 3.500M1529 136.500l4 3.500" stroke="#c8a858" stroke-width="0.600"/></svg>
<div style="left:5px;top:169px;width:28px;height:531px;background:linear-gradient(90deg,#747e8f 0,#8791a0 30%,#9fa7b3 70%,#b4bac4 100%);border-radius:3px 3px 4px 4px"></div>
<div style="left:5px;top:169px;width:28px;height:9px;background:linear-gradient(90deg,#7a8494,#aab1bc);border-radius:3px 3px 0 0"></div>
<svg style="left:10px;top:172px" width="16" height="3"><path d="M0 1.500h16" stroke="#f4f4f4" stroke-width="2" stroke-dasharray="2.500 1.500"/></svg>
<div style="left:11px;top:291px;width:16px;height:1px;background:#e4e7ea"></div>
<div style="left:11px;top:388px;width:16px;height:1px;background:#e4e7ea"></div>
<div style="left:11px;top:418px;width:16px;height:1px;background:#e4e7ea"></div>
<div style="left:11px;top:514px;width:16px;height:1px;background:#e4e7ea"></div>
<div style="left:11px;top:566px;width:16px;height:1px;background:#e4e7ea"></div>
<div style="left:11px;top:596px;width:16px;height:1px;background:#e4e7ea"></div>
<div style="left:33px;top:169px;width:355px;height:22px;background:#a2a2a2;border-radius:3px 3px 0 0"></div>
<svg style="left:36px;top:172px" width="4" height="16"><path d="M0.500 0v16M2.500 0v16" stroke="#222" stroke-width="1" stroke-dasharray="1 1"/></svg>
<div class="t" style="left:45.00px;top:172px;font-size:14.5px;letter-spacing:-0.079px;color:#111;line-height:17px;height:17px;font-weight:bold;">Property</div>
<div style="left:33px;top:190px;width:354px;height:801px;background:#f0f0f0;border-radius:3px 0 3px 3px"></div>
<div style="left:33px;top:991px;width:354px;height:1px;background:#6a6a6a"></div>
<div style="left:49px;top:203px;width:250px;height:21.5px;background:linear-gradient(#f4f4f4,#e4e4e4);border:1px solid #acacac"></div>
<div class="t" style="left:53.00px;top:207px;font-size:11.5px;letter-spacing:-0.108px;color:#000;line-height:14px;height:14px;">Hatch</div>
<svg style="left:287px;top:211px" width="9" height="7"><path d="M1 1L4.500 4.800L8 1" fill="none" stroke="#555" stroke-width="1.900"/></svg>
<div style="left:303px;top:201px;width:24px;height:23.5px;background:linear-gradient(#f2f2f2,#e0e0e0);border:1px solid #adadad"></div>
<div style="left:329px;top:201px;width:24px;height:23.5px;background:linear-gradient(#f2f2f2,#e0e0e0);border:1px solid #adadad"></div>
<div style="left:355px;top:201px;width:24px;height:23.5px;background:linear-gradient(#f2f2f2,#e0e0e0);border:1px solid #adadad"></div>
<svg style="left:306.500px;top:204.500px" width="17" height="17"><rect x="0.500" y="0.500" width="15" height="15" fill="none" stroke="#1a1ad0" stroke-width="1.200" stroke-dasharray="1.200 1.200"/><rect x="3.500" y="3.500" width="9" height="9" fill="#eef2fa" stroke="#1a1ad0" stroke-width="1.200" stroke-dasharray="1.200 1.200"/><path d="M8 5v6M5 8h6" stroke="#2a7acb" stroke-width="1.600"/></svg>
<svg style="left:333px;top:204px" width="17" height="17"><path d="M4.500 0.500h6.500v12h-6.500z" fill="#fff" stroke="#223a8a"/><path d="M1 12.500h11" stroke="#223a8a" stroke-width="1.400"/><path d="M6 2l4 4M10 2l-4 4" stroke="#d22" stroke-width="1.200"/><path d="M9 6v9l2-2 1.500 3 1.300-.6-1.400-2.900h2.800z" fill="#fff" stroke="#223a8a" stroke-width="0.900"/></svg>
<svg style="left:358px;top:204px" width="18" height="17"><path d="M1 2.500c0-2.500 10-2.500 10 0l-3.500 5v6l-3 -1.500v-4.500z" fill="#8fb8e2" stroke="#345a8c" stroke-width="0.900"/><ellipse cx="6" cy="2.500" rx="4.500" ry="1.300" fill="#3a78c0"/><path d="M14 3l-5 7h3l-2.500 6 6.500-8h-3.200l3.200-5z" fill="#ffd21a" stroke="#c88a10" stroke-width="0.700"/></svg>
<div style="left:49px;top:232.0px;width:331px;height:18.5px;background:linear-gradient(#b6b6b6,#9d9d9d);border:1px solid #8e8e8e"></div>
<div class="t" style="left:56.00px;top:234.5px;font-size:12.5px;letter-spacing:-0.350px;color:#111;line-height:14px;height:14px;font-weight:bold;">General</div>
<svg style="left:366px;top:237.5px" width="8" height="5"><path d="M0 5L4 0.500L8 5Z" fill="#111"/></svg>
<div style="left:64px;top:250px;width:316px;height:145px;background:#8c8c8c"></div>
<div style="left:65px;top:250px;width:156px;height:17px;background:#f0f0f0"></div>
<div style="left:222px;top:250px;width:157px;height:17px;background:#fff"></div>
<div class="t" style="left:69.50px;top:252px;font-size:11px;letter-spacing:-0.280px;color:#000;line-height:14px;height:14px;">Color</div>
<div style="left:226px;top:253px;width:11px;height:11px;background:#f00;border:1px solid #7a0000"></div>
<div class="t" style="left:242.00px;top:253px;font-size:11px;letter-spacing:-0.280px;color:#000;line-height:14px;height:14px;">ByLayer</div>
<div style="left:65px;top:268px;width:156px;height:17px;background:#f0f0f0"></div>
<div style="left:222px;top:268px;width:157px;height:17px;background:#fff"></div>
<div class="t" style="left:69.50px;top:270px;font-size:11px;letter-spacing:-0.280px;color:#000;line-height:14px;height:14px;">Layer</div>
<div class="t" style="left:227.00px;top:270px;font-size:11px;letter-spacing:-0.280px;color:#000;line-height:14px;height:14px;">PIL</div>
<div style="left:65px;top:286px;width:156px;height:17px;background:#f0f0f0"></div>
<div style="left:222px;top:286px;width:157px;height:17px;background:#fff"></div>
<div class="t" style="left:69.50px;top:288px;font-size:11px;letter-spacing:-0.280px;color:#000;line-height:14px;height:14px;">Linetype</div>
<div style="left:227px;top:294px;width:32px;height:1px;background:#000"></div>
<div class="t" style="left:263.00px;top:289px;font-size:11px;letter-spacing:-0.280px;color:#000;line-height:14px;height:14px;">ByLayer</div>
<div style="left:65px;top:304px;width:156px;height:17px;background:#f0f0f0"></div>
<div style="left:222px;top:304px;width:157px;height:17px;background:#fff"></div>
<div class="t" style="left:69.50px;top:306px;font-size:11px;letter-spacing:-0.280px;color:#000;line-height:14px;height:14px;">Linetype scale</div>
<div class="t" style="left:227.00px;top:306px;font-size:11px;letter-spacing:-0.280px;color:#000;line-height:14px;height:14px;">0.038</div>
<div style="left:65px;top:322px;width:156px;height:17px;background:#f0f0f0"></div>
<div style="left:222px;top:322px;width:157px;height:17px;background:#f0f0f0"></div>
<div class="t" style="left:69.50px;top:324px;font-size:11px;letter-spacing:-0.280px;color:#000;line-height:14px;height:14px;">Plot style</div>
<div class="t" style="left:227.00px;top:324px;font-size:11px;letter-spacing:-0.280px;color:#000;line-height:14px;height:14px;">ByLayer</div>
<div style="left:65px;top:340px;width:156px;height:17px;background:#f0f0f0"></div>
<div style="left:222px;top:340px;width:157px;height:17px;background:#fff"></div>
<div class="t" style="left:69.50px;top:342px;font-size:11px;letter-spacing:-0.280px;color:#000;line-height:14px;height:14px;">Lineweight</div>
<div style="left:227px;top:348px;width:32px;height:1px;background:#000"></div>
<div class="t" style="left:263.00px;top:343px;font-size:11px;letter-spacing:-0.280px;color:#000;line-height:14px;height:14px;">ByLayer</div>
<div style="left:65px;top:358px;width:156px;height:17px;background:#f0f0f0"></div>
<div style="left:222px;top:358px;width:157px;height:17px;background:#fff"></div>
<div class="t" style="left:69.50px;top:360px;font-size:11px;letter-spacing:-0.280px;color:#000;line-height:14px;height:14px;">Hyperlink</div>
<div style="left:65px;top:376px;width:156px;height:17px;background:#f0f0f0"></div>
<div style="left:222px;top:376px;width:157px;height:17px;background:#fff"></div>
<div class="t" style="left:69.50px;top:378px;font-size:11px;letter-spacing:-0.280px;color:#000;line-height:14px;height:14px;">Transparency</div>
<div class="t" style="left:227.00px;top:378px;font-size:11px;letter-spacing:-0.280px;color:#000;line-height:14px;height:14px;">ByLayer</div>
<div style="left:49px;top:398.0px;width:331px;height:18.5px;background:linear-gradient(#b6b6b6,#9d9d9d);border:1px solid #8e8e8e"></div>
<div class="t" style="left:56.00px;top:400.5px;font-size:12.5px;letter-spacing:-0.350px;color:#111;line-height:14px;height:14px;font-weight:bold;">Misc</div>
<svg style="left:366px;top:403.5px" width="8" height="5"><path d="M0 5L4 0.500L8 5Z" fill="#111"/></svg>
<div style="left:64px;top:416px;width:316px;height:19px;background:#8c8c8c"></div>
<div style="left:65px;top:416px;width:156px;height:17px;background:#f0f0f0"></div>
<div style="left:222px;top:416px;width:157px;height:17px;background:#fff"></div>
<div class="t" style="left:69.50px;top:418px;font-size:11px;letter-spacing:-0.280px;color:#000;line-height:14px;height:14px;">Annotative</div>
<div class="t" style="left:227.00px;top:418px;font-size:11px;letter-spacing:-0.280px;color:#000;line-height:14px;height:14px;">No</div>
<div style="left:49px;top:438.0px;width:331px;height:18.5px;background:linear-gradient(#b6b6b6,#9d9d9d);border:1px solid #8e8e8e"></div>
<div class="t" style="left:56.00px;top:440.5px;font-size:12.5px;letter-spacing:-0.350px;color:#111;line-height:14px;height:14px;font-weight:bold;">Pattern</div>
<svg style="left:366px;top:443.5px" width="8" height="5"><path d="M0 5L4 0.500L8 5Z" fill="#111"/></svg>
<div style="left:64px;top:456px;width:316px;height:199px;background:#8c8c8c"></div>
<div style="left:65px;top:456px;width:156px;height:17px;background:#f0f0f0"></div>
<div style="left:222px;top:456px;width:157px;height:17px;background:#fff"></div>
<div class="t" style="left:69.50px;top:458px;font-size:11px;letter-spacing:-0.280px;color:#000;line-height:14px;height:14px;">Type</div>
<div class="t" style="left:227.00px;top:458px;font-size:11px;letter-spacing:-0.280px;color:#000;line-height:14px;height:14px;">Predefined</div>
<div style="left:65px;top:474px;width:156px;height:17px;background:#f0f0f0"></div>
<div style="left:222px;top:474px;width:157px;height:17px;background:#fff"></div>
<div class="t" style="left:69.50px;top:476px;font-size:11px;letter-spacing:-0.280px;color:#000;line-height:14px;height:14px;">Pattern name</div>
<div class="t" style="left:227.00px;top:476px;font-size:11px;letter-spacing:-0.280px;color:#000;line-height:14px;height:14px;">ANSI31</div>
<div style="left:65px;top:492px;width:156px;height:17px;background:#f0f0f0"></div>
<div style="left:222px;top:492px;width:157px;height:17px;background:#fff"></div>
<div class="t" style="left:69.50px;top:494px;font-size:11px;letter-spacing:-0.280px;color:#000;line-height:14px;height:14px;">Angle</div>
<div class="t" style="left:227.00px;top:494px;font-size:11px;letter-spacing:-0.280px;color:#000;line-height:14px;height:14px;">0.00</div>
<div style="left:65px;top:510px;width:156px;height:17px;background:#f0f0f0"></div>
<div style="left:222px;top:510px;width:157px;height:17px;background:#fff"></div>
<div class="t" style="left:69.50px;top:512px;font-size:11px;letter-spacing:-0.280px;color:#000;line-height:14px;height:14px;">Scale</div>
<div class="t" style="left:227.00px;top:512px;font-size:11px;letter-spacing:-0.280px;color:#000;line-height:14px;height:14px;">0.080</div>
<div style="left:65px;top:528px;width:156px;height:17px;background:#f0f0f0"></div>
<div style="left:222px;top:528px;width:157px;height:17px;background:#fff"></div>
<div class="t" style="left:69.50px;top:530px;font-size:11px;letter-spacing:-0.280px;color:#000;line-height:14px;height:14px;">Origin X</div>
<div class="t" style="left:227.00px;top:530px;font-size:11px;letter-spacing:-0.280px;color:#000;line-height:14px;height:14px;">0</div>
<div style="left:65px;top:546px;width:156px;height:17px;background:#f0f0f0"></div>
<div style="left:222px;top:546px;width:157px;height:17px;background:#fff"></div>
<div class="t" style="left:69.50px;top:548px;font-size:11px;letter-spacing:-0.280px;color:#000;line-height:14px;height:14px;">Origin Y</div>
<div class="t" style="left:227.00px;top:548px;font-size:11px;letter-spacing:-0.280px;color:#000;line-height:14px;height:14px;">0</div>
<div style="left:65px;top:564px;width:156px;height:17px;background:#f0f0f0"></div>
<div style="left:222px;top:564px;width:157px;height:17px;background:#f0f0f0"></div>
<div class="t" style="left:69.50px;top:566px;font-size:11px;letter-spacing:-0.280px;color:#000;line-height:14px;height:14px;">Spacing</div>
<div class="t" style="left:227.00px;top:566px;font-size:11px;letter-spacing:-0.280px;color:#000;line-height:14px;height:14px;">0.080</div>
<div style="left:65px;top:582px;width:156px;height:17px;background:#f0f0f0"></div>
<div style="left:222px;top:582px;width:157px;height:17px;background:#f0f0f0"></div>
<div class="t" style="left:69.50px;top:584px;font-size:11px;letter-spacing:-0.280px;color:#000;line-height:14px;height:14px;">Double</div>
<div class="t" style="left:227.00px;top:584px;font-size:11px;letter-spacing:-0.280px;color:#000;line-height:14px;height:14px;">No</div>
<div style="left:65px;top:600px;width:156px;height:17px;background:#f0f0f0"></div>
<div style="left:222px;top:600px;width:157px;height:17px;background:#fff"></div>
<div class="t" style="left:69.50px;top:602px;font-size:11px;letter-spacing:-0.280px;color:#000;line-height:14px;height:14px;">Associative</div>
<div class="t" style="left:227.00px;top:602px;font-size:11px;letter-spacing:-0.280px;color:#000;line-height:14px;height:14px;">No</div>
<div style="left:65px;top:618px;width:156px;height:17px;background:#f0f0f0"></div>
<div style="left:222px;top:618px;width:157px;height:17px;background:#fff"></div>
<div class="t" style="left:69.50px;top:620px;font-size:11px;letter-spacing:-0.280px;color:#000;line-height:14px;height:14px;">Island detection style</div>
<div class="t" style="left:227.00px;top:620px;font-size:11px;letter-spacing:-0.280px;color:#000;line-height:14px;height:14px;">Normal</div>
<div style="left:65px;top:636px;width:156px;height:17px;background:#f0f0f0"></div>
<div style="left:222px;top:636px;width:157px;height:17px;background:#fff"></div>
<div class="t" style="left:69.50px;top:638px;font-size:11px;letter-spacing:-0.280px;color:#000;line-height:14px;height:14px;">Background color</div>
<div class="t" style="left:227.00px;top:639px;font-size:11px;letter-spacing:-0.280px;color:#000;line-height:14px;height:14px;margin-left:2px;">None</div>
<div style="left:49px;top:658.0px;width:331px;height:18.5px;background:linear-gradient(#b6b6b6,#9d9d9d);border:1px solid #8e8e8e"></div>
<div class="t" style="left:56.00px;top:660.5px;font-size:12.5px;letter-spacing:-0.350px;color:#111;line-height:14px;height:14px;font-weight:bold;">Geometry</div>
<svg style="left:366px;top:663.5px" width="8" height="5"><path d="M0 5L4 0.500L8 5Z" fill="#111"/></svg>
<div style="left:64px;top:676px;width:316px;height:37px;background:#8c8c8c"></div>
<div style="left:65px;top:676px;width:156px;height:17px;background:#f0f0f0"></div>
<div style="left:222px;top:676px;width:157px;height:17px;background:#fff"></div>
<div class="t" style="left:69.50px;top:678px;font-size:11px;letter-spacing:-0.280px;color:#000;line-height:14px;height:14px;">Elevation</div>
<div class="t" style="left:227.00px;top:678px;font-size:11px;letter-spacing:-0.280px;color:#000;line-height:14px;height:14px;">0</div>
<div style="left:65px;top:694px;width:156px;height:17px;background:#f0f0f0"></div>
<div style="left:222px;top:694px;width:157px;height:17px;background:#f0f0f0"></div>
<div class="t" style="left:69.50px;top:696px;font-size:11px;letter-spacing:-0.280px;color:#000;line-height:14px;height:14px;">Area</div>
<div class="t" style="left:227.00px;top:696px;font-size:11px;letter-spacing:-0.280px;color:#000;line-height:14px;height:14px;">1.77</div>
<div style="left:1888px;top:169px;width:27px;height:433px;background:linear-gradient(90deg,#7a8494 0,#8a94a2 30%,#9aa3b0 70%,#aeb5c0 100%);border-radius:3px 3px 4px 4px"></div>
<svg style="left:1893px;top:172px" width="16" height="3"><path d="M0 1.500h16" stroke="#f4f4f4" stroke-width="2" stroke-dasharray="2.500 1.500"/></svg>
<div style="left:1891px;top:266.5px;width:22.5px;height:20.5px;background:linear-gradient(#e8f0fb,#b9d0ee 50%,#9fc0ea 52%,#cfe0f6);border:1px solid #e6eef8;border-radius:2px"></div>
<div style="left:1891px;top:288.5px;width:22.5px;height:20.5px;background:linear-gradient(#e8f0fb,#b9d0ee 50%,#9fc0ea 52%,#cfe0f6);border:1px solid #e6eef8;border-radius:2px"></div>
<div style="left:1891px;top:494px;width:22.5px;height:20.5px;background:linear-gradient(#e8f0fb,#b9d0ee 50%,#9fc0ea 52%,#cfe0f6);border:1px solid #e6eef8;border-radius:2px"></div>
<div style="left:1894px;top:489.5px;width:15px;height:1px;background:#e4e7ea"></div>
<div style="left:1894px;top:541.5px;width:15px;height:1px;background:#e4e7ea"></div>
<svg style="left:0;top:169px" width="34" height="535" viewBox="0 169 34 535"><defs><pattern id="gh" width="3" height="3" patternUnits="userSpaceOnUse"><path d="M-0.500 3.500l4-4" stroke="#444" stroke-width="0.900"/></pattern><pattern id="gh2" width="2.500" height="2.500" patternUnits="userSpaceOnUse"><rect width="3" height="3" fill="#dde"/><path d="M-0.500 3l3.500-3.500" stroke="#222" stroke-width="0.900"/></pattern></defs><path d="M13 194.500L25 183" stroke="#1f2d4a" stroke-width="1.800"/><rect x="11.5" y="193.0" width="3" height="3" fill="#fff" stroke="#2f6fd0" stroke-width="0.900"/><rect x="23.5" y="181.5" width="3" height="3" fill="#fff" stroke="#2f6fd0" stroke-width="0.900"/><path d="M27.5 198v-3l-3 3z" fill="#111"/><path d="M17 208C10 208.500 10.500 216 16 216H25" fill="none" stroke="#1f2d4a" stroke-width="1.600"/><rect x="15.5" y="206.5" width="3" height="3" fill="#fff" stroke="#2f6fd0" stroke-width="0.900"/><rect x="14.5" y="214.5" width="3" height="3" fill="#fff" stroke="#2f6fd0" stroke-width="0.900"/><rect x="23.5" y="214.5" width="3" height="3" fill="#fff" stroke="#2f6fd0" stroke-width="0.900"/><path d="M27.5 220v-3l-3 3z" fill="#111"/><path d="M13 229.500L22.500 239M16 226.500L25.500 236" stroke="#1f2d4a" stroke-width="2"/><rect x="14.0" y="224.5" width="3" height="3" fill="#fff" stroke="#2f6fd0" stroke-width="0.900"/><rect x="24.0" y="235.5" width="3" height="3" fill="#fff" stroke="#2f6fd0" stroke-width="0.900"/><path d="M12 261C12 252 17 258 20 255.500S24 250 25.500 248" fill="none" stroke="#1f2d4a" stroke-width="1.800"/><rect x="10.5" y="259.5" width="3" height="3" fill="#fff" stroke="#2f6fd0" stroke-width="0.900"/><rect x="24.0" y="246.5" width="3" height="3" fill="#fff" stroke="#2f6fd0" stroke-width="0.900"/><path d="M12.500 270C18 272 11 279 15 283.500" fill="none" stroke="#1f2d4a" stroke-width="1.800"/><path d="M17 281.500l7.500-7.500 2.500 2.500-7.500 7.500z" fill="#f5a623"/><path d="M17 281.500l-1.500 4 4-1.500z" fill="#555"/><path d="M24.500 274l1.200-1.200 2.500 2.500-1.200 1.200z" fill="#e8862a"/><circle cx="18.500" cy="307.500" r="6.700" fill="url(#wb)" stroke="#1f2d4a" stroke-width="1.500"/><path d="M16.500 308h3M18 306.500v3" stroke="#2f6fd0" stroke-width="0.900"/><rect x="22.2" y="301.2" width="2.6" height="2.6" fill="#fff" stroke="#2f6fd0" stroke-width="0.900"/><path d="M27.5 314v-3l-3 3z" fill="#111"/><path d="M12 336C12.500 329 17 323 25.500 322" fill="none" stroke="#1f2d4a" stroke-width="1.600"/><rect x="10.5" y="334.5" width="3" height="3" fill="#fff" stroke="#2f6fd0" stroke-width="0.900"/><rect x="14.5" y="324.5" width="3" height="3" fill="#fff" stroke="#2f6fd0" stroke-width="0.900"/><rect x="24.0" y="320.5" width="3" height="3" fill="#fff" stroke="#2f6fd0" stroke-width="0.900"/><path d="M27.5 338v-3l-3 3z" fill="#111"/><ellipse cx="18.500" cy="351" rx="7.300" ry="4.800" fill="url(#wb)" stroke="#1f2d4a" stroke-width="1.500"/><rect x="10.2" y="349.7" width="2.6" height="2.6" fill="#fff" stroke="#2f6fd0" stroke-width="0.900"/><rect x="24.2" y="349.7" width="2.6" height="2.6" fill="#fff" stroke="#2f6fd0" stroke-width="0.900"/><rect x="17.2" y="344.7" width="2.6" height="2.6" fill="#fff" stroke="#2f6fd0" stroke-width="0.900"/><rect x="17.2" y="354.7" width="2.6" height="2.6" fill="#fff" stroke="#2f6fd0" stroke-width="0.900"/><path d="M27.5 358v-3l-3 3z" fill="#111"/><path d="M12 371C12 362 25.500 362 25.500 371Q24 375 19 375.500" fill="none" stroke="#1f2d4a" stroke-width="1.500"/><rect x="10.5" y="369.5" width="3" height="3" fill="#fff" stroke="#2f6fd0" stroke-width="0.900"/><rect x="24.0" y="369.5" width="3" height="3" fill="#fff" stroke="#2f6fd0" stroke-width="0.900"/><rect x="17.5" y="374.0" width="3" height="3" fill="#fff" stroke="#2f6fd0" stroke-width="0.900"/><path d="M27.5 380v-3l-3 3z" fill="#111"/><rect x="17" y="401.500" width="3.500" height="3.500" fill="#fff" stroke="#222" stroke-width="1"/><rect x="12" y="428.500" width="13.500" height="8.500" fill="url(#wb)" stroke="#1f2d4a" stroke-width="1.500"/><rect x="24.2" y="426.7" width="2.6" height="2.6" fill="#fff" stroke="#2f6fd0" stroke-width="0.900"/><rect x="10.7" y="435.7" width="2.6" height="2.6" fill="#fff" stroke="#2f6fd0" stroke-width="0.900"/><path d="M13 450.500C16 447 24 447 25.500 449.500L12.500 454.500C16 451 24 451 25.500 453.500L12.500 458.500C16 455 24 455 25.500 457.500L13 462" fill="none" stroke="#777" stroke-width="2.200" stroke-linejoin="round"/><path d="M18.500 468.500L26 474.500L23 483.500H14L11 474.500Z" fill="url(#wb)" stroke="#1f2d4a" stroke-width="1.400"/><path d="M17 476.500h3M18.500 475v3" stroke="#2f6fd0" stroke-width="0.900"/><rect x="12.7" y="482.2" width="2.6" height="2.6" fill="#fff" stroke="#2f6fd0" stroke-width="0.900"/><path d="M27.5 486v-3l-3 3z" fill="#111"/><rect x="11" y="491" width="16" height="15" fill="url(#gh)"/><path d="M13.500 493.500h6.500v4h4.500v6.500h-11z" fill="#fff" stroke="#222" stroke-width="1.200"/><circle cx="18.500" cy="529" r="5" fill="none" stroke="#fff" stroke-width="4.500"/><circle cx="18.500" cy="529" r="7.300" fill="none" stroke="#6a7080" stroke-width="0.800"/><circle cx="18.500" cy="529" r="2.700" fill="#555" stroke="#444" stroke-width="0.600"/><rect x="11.500" y="543.500" width="12.500" height="9" fill="#fff" stroke="#c0c4cc" stroke-width="0.600"/><path d="M11.500 552.500H19L27 558M24 549.500V553.500L27 558" fill="none" stroke="#1f2d4a" stroke-width="1.400"/><rect x="12" y="576" width="11.500" height="7.500" fill="url(#wb)" stroke="#1f2d4a" stroke-width="1.200"/><circle cx="22" cy="583.500" r="3.800" fill="#e8eef8" stroke="#1f2d4a" stroke-width="1.100"/><rect x="10.7" y="579.2" width="2.6" height="2.6" fill="#fff" stroke="#2f6fd0" stroke-width="0.900"/><rect x="13.500" y="605.500" width="11" height="11" fill="url(#gh2)" stroke="#222" stroke-width="1"/><path d="M11 605.500h16M11 616.500h16M13.500 603v16M24.500 603v16" stroke="#222" stroke-width="0.900"/><path d="M13.500 631c-1-3 2.500-5 4.500-3.500 1.500-2 5.500-1 5.500 1.500 2.500 0.500 3 4 1 5 1 2.500-1.500 5-4 4-1.500 2-5 1.500-5.500-0.500-3 0.500-4.500-3-2.500-4.500z" fill="#fff" stroke="#1f2d4a" stroke-width="1.300"/><path d="M11.500 661.500h14" stroke="#111" stroke-width="1.200"/></svg>
<div class="t" style="left:11.500px;top:644px;font-size:18.500px;line-height:18px;height:18px;font-weight:bold;color:#2a5aa8">A</div>
<div class="t" style="left:11.500px;top:667px;font-size:18.500px;line-height:18px;height:18px;font-weight:bold;color:#2a5aa8">A</div>
<svg style="left:1886px;top:169px" width="34" height="440" viewBox="1886 169 34 440"><path d="M1897 188.500h10" stroke="#7a7a7a" stroke-width="1"/><rect x="1895" y="187" width="3" height="3" fill="#8a8a8a"/><rect x="1906.0" y="187.0" width="3" height="3" fill="#f01818" shape-rendering="crispEdges"/><rect x="1907.0" y="188.0" width="1" height="1" fill="#fff" shape-rendering="crispEdges"/><path d="M1897.500 216v-8.500h9" fill="none" stroke="#7a7a7a" stroke-width="1"/><rect x="1896" y="214.500" width="3" height="3" fill="#8a8a8a"/><rect x="1905.0" y="206.0" width="3" height="3" fill="#f01818" shape-rendering="crispEdges"/><rect x="1906.0" y="207.0" width="1" height="1" fill="#fff" shape-rendering="crispEdges"/><path d="M1896.500 227v13M1908.500 227v13" stroke="#1f2d4a" stroke-width="1.300"/><rect x="1895.0" y="226.0" width="3" height="3" fill="#f01818" shape-rendering="crispEdges"/><rect x="1896.0" y="227.0" width="1" height="1" fill="#fff" shape-rendering="crispEdges"/><rect x="1901.0" y="232.0" width="3" height="3" fill="#f01818" shape-rendering="crispEdges"/><rect x="1902.0" y="233.0" width="1" height="1" fill="#fff" shape-rendering="crispEdges"/><rect x="1907.0" y="238.0" width="3" height="3" fill="#f01818" shape-rendering="crispEdges"/><rect x="1908.0" y="239.0" width="1" height="1" fill="#fff" shape-rendering="crispEdges"/><circle cx="1902" cy="254.500" r="7" fill="none" stroke="#1f2d4a" stroke-width="1.500"/><rect x="1906.0" y="258.0" width="3" height="3" fill="#f01818" shape-rendering="crispEdges"/><rect x="1907.0" y="259.0" width="1" height="1" fill="#fff" shape-rendering="crispEdges"/><path d="M1894.500 269L1906 281.500" stroke="#1f2d4a" stroke-width="1.500"/><rect x="1904.0" y="280.0" width="3" height="3" fill="#f01818" shape-rendering="crispEdges"/><rect x="1905.0" y="281.0" width="1" height="1" fill="#fff" shape-rendering="crispEdges"/><path d="M1894 293.500h15M1894 305.500Q1901.500 295 1909 305.500" fill="none" stroke="#1f2d4a" stroke-width="1.400"/><rect x="1900.0" y="292.0" width="3" height="3" fill="#f01818" shape-rendering="crispEdges"/><rect x="1901.0" y="293.0" width="1" height="1" fill="#fff" shape-rendering="crispEdges"/><rect x="1900.0" y="299.0" width="3" height="3" fill="#f01818" shape-rendering="crispEdges"/><rect x="1901.0" y="300.0" width="1" height="1" fill="#fff" shape-rendering="crispEdges"/><circle cx="1902.500" cy="320.500" r="7" fill="none" stroke="#1f2d4a" stroke-width="1.500"/><rect x="1901.0" y="319.0" width="3" height="3" fill="#f01818" shape-rendering="crispEdges"/><rect x="1902.0" y="320.0" width="1" height="1" fill="#fff" shape-rendering="crispEdges"/><path d="M1901.500 335v12.500M1894 347.500h16" stroke="#1f2d4a" stroke-width="1.300"/><rect x="1900.0" y="346.0" width="3" height="3" fill="#f01818" shape-rendering="crispEdges"/><rect x="1901.0" y="347.0" width="1" height="1" fill="#fff" shape-rendering="crispEdges"/><circle cx="1902.500" cy="367.500" r="4" fill="none" stroke="#1f2d4a" stroke-width="1.400"/><path d="M1897.500 358l7.500 6" stroke="#1f2d4a" stroke-width="1.400"/><rect x="1904.0" y="363.0" width="3" height="3" fill="#f01818" shape-rendering="crispEdges"/><rect x="1905.0" y="364.0" width="1" height="1" fill="#fff" shape-rendering="crispEdges"/><circle cx="1901.500" cy="387.500" r="6.500" fill="none" stroke="#1f2d4a" stroke-width="1.500"/><rect x="1900.0" y="379.5" width="3" height="3" fill="#f01818" shape-rendering="crispEdges"/><rect x="1901.0" y="380.5" width="1" height="1" fill="#fff" shape-rendering="crispEdges"/><rect x="1906.5" y="386.0" width="3" height="3" fill="#f01818" shape-rendering="crispEdges"/><rect x="1907.5" y="387.0" width="1" height="1" fill="#fff" shape-rendering="crispEdges"/><rect x="1900.0" y="392.5" width="3" height="3" fill="#f01818" shape-rendering="crispEdges"/><rect x="1901.0" y="393.5" width="1" height="1" fill="#fff" shape-rendering="crispEdges"/><rect x="1893.5" y="386.0" width="3" height="3" fill="#f01818" shape-rendering="crispEdges"/><rect x="1894.5" y="387.0" width="1" height="1" fill="#fff" shape-rendering="crispEdges"/><rect x="1895.500" y="404" width="11" height="6.500" fill="url(#wb)" stroke="#1f2d4a" stroke-width="1.200"/><circle cx="1905.500" cy="410.500" r="3.500" fill="#e8eef8" stroke="#1f2d4a" stroke-width="1"/><rect x="1894.0" y="409.0" width="3" height="3" fill="#f01818" shape-rendering="crispEdges"/><rect x="1895.0" y="410.0" width="1" height="1" fill="#fff" shape-rendering="crispEdges"/><rect x="1900.0" y="429.0" width="3" height="3" fill="#f01818" shape-rendering="crispEdges"/><rect x="1901.0" y="430.0" width="1" height="1" fill="#fff" shape-rendering="crispEdges"/><path d="M1894.500 445.500l8 8" stroke="#1f2d4a" stroke-width="0.900"/><path d="M1902.500 453.500l7 6.700" stroke="#1f2d4a" stroke-width="1.700"/><rect x="1901.0" y="452.0" width="3" height="3" fill="#f01818" shape-rendering="crispEdges"/><rect x="1902.0" y="453.0" width="1" height="1" fill="#fff" shape-rendering="crispEdges"/><path d="M1894.500 471l10 10M1898 468l10.500 10" stroke="#1f2d4a" stroke-width="1.600"/><rect x="1898.0" y="475.0" width="3" height="3" fill="#f01818" shape-rendering="crispEdges"/><rect x="1899.0" y="476.0" width="1" height="1" fill="#fff" shape-rendering="crispEdges"/><path d="M1894 498.500l15.500 12M1894 510.500l15.500-12" stroke="#1f2d4a" stroke-width="1.300"/><path d="M1901.500 496v17" stroke="#fff" stroke-width="1"/><rect x="1900.0" y="503.0" width="3" height="3" fill="#f01818" shape-rendering="crispEdges"/><rect x="1901.0" y="504.0" width="1" height="1" fill="#fff" shape-rendering="crispEdges"/><path d="M1894 520l15.500 10M1894 534.500l15.500-13" stroke="#1f2d4a" stroke-width="1.300"/><path d="M1898.500 518v18" stroke="#fff" stroke-width="1"/><rect x="1904.0" y="525.0" width="3" height="3" fill="#f01818" shape-rendering="crispEdges"/><rect x="1905.0" y="526.0" width="1" height="1" fill="#fff" shape-rendering="crispEdges"/><g fill="none" stroke="#666" stroke-width="2" stroke-linecap="round" stroke-linejoin="round"><circle cx="1905.500" cy="549.500" r="1.300" fill="#666"/><path d="M1898.500 553.500l3.500-1.500 3 1.500-2.500 4.500 3 2.500-1.500 4.500M1903 558l-2.500 3.500-4.500 0.500M1905 553.500l2.500 2.500 2.500-0.500"/></g><path d="M1896.500 573.500l12 12M1908.500 573.500l-12 12" stroke="#e02a10" stroke-width="3.200"/><rect x="1894.0" y="577.0" width="3" height="3" fill="#f01818" shape-rendering="crispEdges"/><rect x="1895.0" y="578.0" width="1" height="1" fill="#fff" shape-rendering="crispEdges"/><rect x="1907.0" y="577.0" width="3" height="3" fill="#f01818" shape-rendering="crispEdges"/><rect x="1908.0" y="578.0" width="1" height="1" fill="#fff" shape-rendering="crispEdges"/></svg>
<div style="left:387px;top:169px;width:4px;height:822px;background:#585858"></div>
<div style="left:391px;top:169px;width:1496px;height:806px;background:#000"></div>
<svg style="left:391px;top:169px" width="1496" height="806" viewBox="391 169 1496 806" shape-rendering="crispEdges"><defs>
<pattern id="hd" width="3" height="3" patternUnits="userSpaceOnUse"><rect width="3" height="3" fill="#000"/><path d="M-0.500 0.500l1 -1M-0.500 3.500l4 -4M2.500 3.500l1 -1" stroke="#ff0000" stroke-width="1.250" shape-rendering="crispEdges"/></pattern>
<pattern id="ph" width="3" height="3" patternUnits="userSpaceOnUse"><rect width="3" height="3" fill="#100000"/><path d="M-0.500 0.500l1 -1M-0.500 3.500l4 -4M2.500 3.500l1 -1" stroke="#ff0000" stroke-width="1.350" shape-rendering="crispEdges"/></pattern>
</defs><path d="M465.5 169V706M552.5 169V706M640.5 169V706M727.5 169V354M814.5 169V354M902.5 169V354M989.5 169V354M1076.5 169V354M1164.5 169V354M1251.5 169V354M1338.5 169V354M1425.5 169V975M1513.5 169V975M1600.5 169V975M1687.5 169V975M1775.5 169V975M1862.5 169V975M391 257.500H1887M391 536.500H677M1390 536.500H1887M1386 815.500H1887" fill="none" stroke="#8d8d8d" stroke-width="1" />
<rect x="1002" y="181" width="62" height="121.500" fill="url(#ph)"/>
<path d="M1002.500 181.500H1063.500V302.500H1002.500Z" fill="none" stroke="#00ffff" stroke-width="1" stroke-dasharray="3 1"/>
<path d="M1002.500 181.500L1063.500 302.500M1063.500 181.500L1002.500 302.500" fill="none" stroke="#00ffff" stroke-width="1" />
<path d="M1032.500 177V181M1032.500 303V350" fill="none" stroke="#ff00ff" stroke-width="1" />
<path d="M1032.500 181V302" fill="none" stroke="#ff40ff" stroke-width="1" stroke-dasharray="1 3" opacity="0.7"/>
<path d="M1002 257.500H1064" fill="none" stroke="#c08080" stroke-width="1" stroke-dasharray="3 2"/>
<path d="M676.500 959.500V350.500H1389.500V959.500H1514.500V975M676.500 959.500H551.500V975M391 706.500H681M391 767.500H681M744.500 764V933M1320.500 764V975" fill="none" stroke="#ff0000" stroke-width="1" />
<path d="M818 716.500H1022M1045 716.500H1250M818 726.500H841.500V716.500M1002.500 716.500V726.500H1022M1045 726.500H1065.500V716.500M1224.500 716.500V726.500H1250" fill="none" stroke="#ff0000" stroke-width="1" />
<path d="M801.5 485.500V666.500H841.5V681.500H926.5V676.500M801.5 485.500H1002.5V716M761.5 676.500H1002.5M761.5 676.500V691.500H1002.5M918.5 691.500V686.500H1002.5M841.5 691.500V696.500M1002.5 696.500H761.5V716M918.5 696.500V701.500H1002.5M841.5 706.500H926.5V711.500H841.5Z" fill="none" stroke="#0000ff" stroke-width="1" />
<g transform="translate(0 -1)">
<path d="M1266.5 485.500V666.500H1226.5V681.500H1141.5V676.500M1266.5 485.500H1065.5V716M1306.5 676.500H1065.5M1306.5 676.500V691.500H1065.5M1149.5 691.500V686.500H1065.5M1226.5 691.500V696.500M1065.5 696.500H1306.5V716M1149.5 696.500V701.500H1065.5M1226.5 706.500H1141.5V711.500H1226.5Z" fill="none" stroke="#0000ff" stroke-width="1" />
</g>
<path d="M821.500 434.500H982.500V465.500H821.500Z M1085.500 434.500H1246.500V464.500H1085.500Z" fill="none" stroke="#0000ff" stroke-width="1" />
<path d="M740 716.500H818.500V736.500H740M1325 715.500H1249.500V736.500H1325M1022.500 716.500H1045.500V736.500H1021.500V730.500H1022.500Z" fill="none" stroke="#ffff00" stroke-width="1" />
<path d="M680.5 742V749.500H695.5V758.500H725.5V749.500H740.5V742M680.5 975V963.500M680.5 963.500V948H695.5V940.500H725.5V948H740.5V963.500" fill="none" stroke="#ffff00" stroke-width="1" />
<path d="M673 749.500H680.5M740.5 749.500H744.5V763.500M692.5 758.500V761.500H694.5V763.500M728.5 758.500V761.500H726.5V763.500M692.5 758.500H695.5M725.5 758.500H728.5M707.5 764V933M713.5 764V933M713.5 761.500H717.5V765.500H713.5Z M713.5 931.500H717.5V935.500H713.5ZM676.5 933.500H744.5V948.500H729.5M676.5 933.500V948.500H692.5M692.5 940.500V937.500H694.5V935.500H726.5V937.500H728.5V940.500" fill="none" stroke="#00ffff" stroke-width="1" />
<path d="M1385.0 742V749.500H1370.0V758.500H1340.0V749.500H1325.0V742M1385.0 975V963.500M1385.0 963.500V948H1370.0V940.500H1340.0V948H1325.0V963.500" fill="none" stroke="#ffff00" stroke-width="1" />
<path d="M1325.0 749.500H1321.0V763.500M1373.0 758.500V761.500H1371.0V763.500M1337.0 758.500V761.500H1339.0V763.500M1373.0 758.500H1370.0M1340.0 758.500H1337.0M1358.0 764V933M1352.0 764V933M1352.0 761.500H1348.0V765.500H1352.0Z M1352.0 931.500H1348.0V935.500H1352.0ZM1389.0 933.500H1321.0V948.500H1336.0M1389.0 933.500V948.500H1373.0M1373.0 940.500V937.500H1371.0V935.500H1339.0V937.500H1337.0V940.500" fill="none" stroke="#00ffff" stroke-width="1" />
<path d="M744.500 764.500H537.500V771A171.500 171.500 0 0 0 709 935.500" fill="none" stroke="#00ffff" stroke-width="1" />
<path d="M391 732.500H676M670.500 732.500V743.500M676 743.500H391M391 738.500H670.500" fill="none" stroke="#00ffff" stroke-width="1" />
<path d="M1320.500 764.500H1528.500V768A171.500 171.500 0 0 1 1357 935.500" fill="none" stroke="#00ffff" stroke-width="1" />
<path d="M555.500 975V963.500H803.500V975M634.500 963.500V975M1386 948.500V963.500H1511.500V975M1431.500 963.500V975M1325 948.500V975" fill="none" stroke="#ffff00" stroke-width="1" />
<clipPath id="hc"><polygon points="680 354 1386 354 1386 737 1325 737 1325 414 1063.500 453.500 1004 453.500 1004 414 740 414 740 737 680 737"/></clipPath>
<clipPath id="hc2"><polygon points="670 340 1399 340 1385 354 1325 414 1325 470 670 470"/></clipPath>
<g clip-path="url(#hc)" fill="none" stroke="url(#hd)" stroke-width="3.100" stroke-linejoin="miter"><path d="M681.5 355V735.5H740M687.5 355V729.5H740M693.5 355V723.5H740M699.5 355V717.5H740M705.5 355V711.5H740M711.5 355V705.5H740M717.5 355V699.5H740M723.5 355V693.5H740M729.5 355V687.5H740M735.5 355V681.5H740M1326.5 412.5V735.5H1387M1332.5 406.5V729.5H1387M1338.5 400.5V723.5H1387M1344.5 394.5V717.5H1387M1350.5 388.5V711.5H1387M1356.5 382.5V705.5H1387M1362.5 376.5V699.5H1387M1368.5 370.5V693.5H1387M1374.5 364.5V687.5H1387M1380.5 358.5V681.5H1387"/><g clip-path="url(#hc2)"><path d="M741.500 355V414M747.5 355V407.5H1012V446.5L1400 417.4M753.5 355V401.5H1018V440.5L1400 411.9M759.5 355V395.5H1024V434.5L1400 406.3M765.5 355V389.5H1030V428.5L1400 400.8M771.5 355V383.5H1036V422.5L1400 395.2M777.5 355V377.5H1042V416.5L1400 389.6M783.5 355V371.5H1048V410.5L1400 384.1M789.5 355V365.5H1054V404.5L1400 378.6M795.5 355V359.5H1060V398.5L1400 373.0M1066 355V392.5L1400 367.4M1072 355V386.5L1400 361.9M1078 355V380.5L1400 356.4M1084 355V374.5L1400 350.8M1090 355V368.5L1400 345.2M1096 355V362.5L1400 339.7M1012 452.5L1400 423.4M1012 458.5L1400 429.4M1012 464.5L1400 435.4M1012 470.5L1400 441.4M1012 476.5L1400 447.4M1012 482.5L1400 453.4M1012 488.5L1400 459.4"/></g></g>
<path d="M680.500 354.500H1385.500V736.500H1325.500V414.500L1063.500 453.500H1004.500V414.500H740.500V736.500H680.500" fill="none" stroke="#ff0000" stroke-width="1" stroke-dasharray="4 3"/>
<path d="M1085.500 450V434.500H1194" fill="none" stroke="#0000ff" stroke-width="1" stroke-dasharray="2 2"/>
<path d="M1105 414.500H1325" fill="none" stroke="#ff0000" stroke-width="1" />
<path d="M1063.500 414V453M1063 414.500H1105" fill="none" stroke="#ff0000" stroke-width="1" stroke-dasharray="3 3"/>
<rect x="675.0" y="349.0" width="11" height="11" fill="#0080ff"/>
<rect x="1380.0" y="349.0" width="11" height="11" fill="#0080ff"/>
<rect x="735.0" y="408.5" width="11" height="11" fill="#0080ff"/>
<rect x="999.0" y="408.5" width="11" height="11" fill="#0080ff"/>
<rect x="1319.0" y="408.5" width="11" height="11" fill="#0080ff"/>
<rect x="999.0" y="448.0" width="11" height="11" fill="#0080ff"/>
<rect x="675.0" y="731.5" width="11" height="11" fill="#0080ff"/>
<rect x="735.0" y="731.5" width="11" height="11" fill="#0080ff"/>
<rect x="1319.0" y="731.0" width="11" height="11" fill="#0080ff"/>
<rect x="1380.0" y="731.0" width="11" height="11" fill="#0080ff"/>
<rect x="1058" y="448" width="11" height="11" fill="#ff8080"/>
<rect x="1027.0" y="352.5" width="11" height="4" fill="#0080ff"/>
<rect x="866.5" y="412.5" width="11" height="4" fill="#0080ff"/>
<rect x="1028.0" y="451.5" width="11" height="4" fill="#0080ff"/>
<rect x="705.0" y="735" width="11" height="4" fill="#0080ff"/>
<rect x="1348.5" y="734.5" width="11" height="4" fill="#0080ff"/>
<rect x="1002.5" y="428.0" width="4" height="11" fill="#0080ff"/>
<rect x="678.5" y="540.0" width="4" height="11" fill="#0080ff"/>
<rect x="738.5" y="570.0" width="4" height="11" fill="#0080ff"/>
<rect x="1322.5" y="570.0" width="4" height="11" fill="#0080ff"/>
<rect x="1383.5" y="540.0" width="4" height="11" fill="#0080ff"/>
<rect x="1188.500" y="432" width="11" height="4" fill="#0080ff" transform="rotate(-8.500 1194 434)"/>
<circle cx="1039" cy="472" r="8.500" fill="#0080ff" shape-rendering="auto"/>
<path d="M418.500 932.500H433.500V947.500H418.500Z" fill="none" stroke="#ffffff" stroke-width="1" />
<path d="M426.500 932V872M418.500 872.500H433.500L426 850.500Z" fill="none" stroke="#00ff00" stroke-width="1" />
<path d="M433 939.500H494M494.500 932V947L517.500 939.500Z" fill="none" stroke="#ff0000" stroke-width="1" />
<g shape-rendering="auto" font-family="'DejaVu Sans Light','DejaVu Sans',sans-serif" font-weight="200" fill="#00ffff">
<text transform="translate(814.5 297.5) scale(1.2 1)" font-size="51.500" text-anchor="middle" stroke="#000" stroke-width="1" vector-effect="non-scaling-stroke">P</text>
<text transform="translate(851 297.5) scale(1.12 1)" font-size="51.500" text-anchor="middle" stroke="#000" stroke-width="1" vector-effect="non-scaling-stroke">8</text>
<text transform="translate(888.5 297.5) scale(1.12 1)" font-size="51.500" text-anchor="middle" stroke="#000" stroke-width="1" vector-effect="non-scaling-stroke">8</text>
<text transform="translate(857.5 539) scale(0.9 1)" font-size="51.500" text-anchor="middle" stroke="#000" stroke-width="1" vector-effect="non-scaling-stroke">C</text>
<text transform="translate(895.5 539) scale(1.19 1)" font-size="51.500" text-anchor="middle" stroke="#000" stroke-width="1" vector-effect="non-scaling-stroke">E</text>
<text transform="translate(931 539) scale(0.99 1)" font-size="51.500" text-anchor="middle" stroke="#000" stroke-width="1" vector-effect="non-scaling-stroke">4</text>
<text x="419" y="833" font-size="21" fill="#fff" stroke="#000" stroke-width="0.600">Y</text>
<text x="533" y="947" font-size="21" fill="#fff" stroke="#000" stroke-width="0.600">X</text>
</g>
</svg>
<div style="left:1082.5px;top:470.5px;width:140.5px;height:71px;background:#fafafa;border:1px solid #c4c4c4;box-shadow:1px 1px 2px rgba(0,0,0,0.35)"></div>
<div style="left:1083.5px;top:471.5px;width:25px;height:69px;background:#ededed;border-right:1px solid #dcdcdc"></div>
<div class="t" style="left:1114.00px;top:477px;font-size:11.5px;letter-spacing:-0.062px;color:#3a3a3a;line-height:14px;height:14px;">Stretch</div>
<div class="t" style="left:1114.00px;top:499px;font-size:11.5px;letter-spacing:0.024px;color:#3a3a3a;line-height:14px;height:14px;">Add Vertex</div>
<div class="t" style="left:1114.00px;top:521px;font-size:11.5px;letter-spacing:-0.240px;color:#3a3a3a;line-height:14px;height:14px;">Remove Vertex</div>
<div style="left:391px;top:975px;width:1496px;height:17px;background:#f0f0f0"></div>
<div style="left:33px;top:992px;width:1854px;height:4px;background:#505050"></div>
<div style="left:391.5px;top:975.5px;width:15px;height:14.5px;background:#f4f4f4;border:1px solid #c2c2c2"></div>
<div style="left:407px;top:975.5px;width:15px;height:14.5px;background:#f4f4f4;border:1px solid #c2c2c2"></div>
<div style="left:423px;top:975.5px;width:15px;height:14.5px;background:#f4f4f4;border:1px solid #c2c2c2"></div>
<div style="left:439px;top:975.5px;width:15px;height:14.5px;background:#f4f4f4;border:1px solid #c2c2c2"></div>
<svg style="left:391px;top:975px" width="180" height="17" viewBox="0 0 180 17">
<path d="M4.500 4v7.500" stroke="#111" stroke-width="1.300"/><path d="M11 4v7.500L6 7.750Z" fill="#111"/>
<path d="M26.500 4v7.500L21.500 7.750Z" fill="#111"/>
<path d="M37 4v7.500L42 7.750Z" fill="#111"/>
<path d="M52 4v7.500L57 7.750Z" fill="#111"/><path d="M58.500 4v7.500" stroke="#111" stroke-width="1.300"/>
<path d="M65.500 0L72.500 15.500H111.500L118.500 0Z" fill="#fff" stroke="none"/><path d="M65.500 0L72.500 15.500H111.500L118.500 0M115 7.500L119.500 15.500H159L166.500 0" fill="none" stroke="#222" stroke-width="1"/>
</svg>
<div class="t" style="left:467.00px;top:976px;font-size:11.5px;letter-spacing:-0.244px;color:#000;line-height:14px;height:14px;font-weight:bold;">Model</div>
<div class="t" style="left:516.00px;top:976px;font-size:11px;letter-spacing:-0.226px;color:#111;line-height:14px;height:14px;">layout</div>
<div style="left:33px;top:996px;width:1854px;height:56px;background:#d0d0d0"></div>
<div style="left:34px;top:996px;width:18px;height:56px;background:#a4a4a4"></div>
<svg style="left:38px;top:1001px" width="10" height="36" viewBox="0 0 10 36"><path d="M1.500 1.500L8.500 8.500M8.500 1.500L1.500 8.500" stroke="#333" stroke-width="1.100"/><path d="M3.500 18.500h3v5h-3zM2 23.500h6M5 23.500v4.500" fill="none" stroke="#444" stroke-width="1.100"/></svg>
<div style="left:54px;top:997.5px;width:1832px;height:33px;background:#fff"></div>
<div style="left:1869px;top:998px;width:16px;height:32px;background:#f0f0f0"></div>
<svg style="left:1872px;top:1002px" width="10" height="24" viewBox="0 0 10 24"><path d="M1.500 6L5 2.500L8.500 6M1.500 17.500L5 21L8.500 17.500" fill="none" stroke="#444" stroke-width="1.500"/></svg>
<div style="left:54px;top:1030px;width:1832px;height:1px;background:#6e6e6e"></div>
<div style="left:54px;top:1031px;width:1832px;height:20px;background:#fff"></div>
<div style="left:53px;top:997px;width:1px;height:54px;background:#8a8a8a"></div>
<div class="cmd" style="left:55px;top:998.500px">** STRETCH **</div>
<div class="cmd" style="left:55px;top:1012.500px">Specify stretch point or [Base point/Copy/Undo/eXit]:</div>
<div class="cmd" style="left:58px;top:1033px;font-size:11.400px;font-weight:bold;letter-spacing:0;color:#111">Command:</div>
<div style="left:4px;top:1052px;width:1912px;height:22px;background:linear-gradient(#454b57 0,#434956 8px,#353638 9px,#343434 22px)"></div>
<div class="t" style="left:9.00px;top:1057px;font-size:11.2px;letter-spacing:0.172px;color:#fff;line-height:14px;height:14px;">Move segment or change bulge.</div>
<div style="left:1329px;top:1054px;width:2px;height:19px;background:linear-gradient(90deg,#222 50%,#5c5f66 50%)"></div>
<div style="left:1340px;top:1054px;width:2px;height:19px;background:linear-gradient(90deg,#222 50%,#5c5f66 50%)"></div>
<div style="left:1478px;top:1054px;width:2px;height:19px;background:linear-gradient(90deg,#222 50%,#5c5f66 50%)"></div>
<div style="left:1526px;top:1054px;width:2px;height:19px;background:linear-gradient(90deg,#222 50%,#5c5f66 50%)"></div>
<div style="left:1567px;top:1054px;width:2px;height:19px;background:linear-gradient(90deg,#222 50%,#5c5f66 50%)"></div>
<div style="left:1590px;top:1054px;width:2px;height:19px;background:linear-gradient(90deg,#222 50%,#5c5f66 50%)"></div>
<div style="left:1611px;top:1054px;width:2px;height:19px;background:linear-gradient(90deg,#222 50%,#5c5f66 50%)"></div>
<div style="left:1633px;top:1054px;width:2px;height:19px;background:linear-gradient(90deg,#222 50%,#5c5f66 50%)"></div>
<div style="left:1656px;top:1054px;width:2px;height:19px;background:linear-gradient(90deg,#222 50%,#5c5f66 50%)"></div>
<div style="left:1678px;top:1054px;width:2px;height:19px;background:linear-gradient(90deg,#222 50%,#5c5f66 50%)"></div>
<div style="left:1700px;top:1054px;width:2px;height:19px;background:linear-gradient(90deg,#222 50%,#5c5f66 50%)"></div>
<div style="left:1722px;top:1054px;width:2px;height:19px;background:linear-gradient(90deg,#222 50%,#5c5f66 50%)"></div>
<div style="left:1744px;top:1054px;width:2px;height:19px;background:linear-gradient(90deg,#222 50%,#5c5f66 50%)"></div>
<div style="left:1766px;top:1054px;width:2px;height:19px;background:linear-gradient(90deg,#222 50%,#5c5f66 50%)"></div>
<div style="left:1810px;top:1054px;width:2px;height:19px;background:linear-gradient(90deg,#222 50%,#5c5f66 50%)"></div>
<div style="left:1850px;top:1054px;width:2px;height:19px;background:linear-gradient(90deg,#222 50%,#5c5f66 50%)"></div>
<div style="left:1874px;top:1054px;width:2px;height:19px;background:linear-gradient(90deg,#222 50%,#5c5f66 50%)"></div>
<div style="left:1895px;top:1054px;width:2px;height:19px;background:linear-gradient(90deg,#222 50%,#5c5f66 50%)"></div>
<div class="t" style="left:1344.00px;top:1057px;font-size:11.2px;letter-spacing:-0.177px;color:#fff;line-height:14px;height:14px;">47.056,-391.085,0.000</div>
<div class="t" style="left:1483.00px;top:1057px;font-size:11.2px;letter-spacing:-0.223px;color:#fff;line-height:14px;height:14px;">OpenGL</div>
<div class="t" style="left:1551.00px;top:1057px;font-size:11.2px;letter-spacing:-0.857px;color:#fff;line-height:14px;height:14px;">1:1</div>
<div class="t" style="left:1769.00px;top:1057px;font-size:11.2px;letter-spacing:-0.466px;color:#fff;line-height:14px;height:14px;">MODEL</div>
<div class="t" style="left:1814.00px;top:1057px;font-size:11.2px;letter-spacing:-1.332px;color:#9a9a9a;line-height:14px;height:14px;">TABLET</div>
<div style="left:1570px;top:1055px;width:17px;height:17px;background:#6f7072"></div>
<div style="left:1680px;top:1055px;width:17px;height:17px;background:#6f7072"></div>
<div style="left:1703px;top:1055px;width:17px;height:17px;background:#6f7072"></div>
<div style="left:1725px;top:1055px;width:17px;height:17px;background:#6f7072"></div>
<svg style="left:1530px;top:1054px" width="390" height="20" viewBox="1530 1054 390 20">
<path d="M1538.500 1057c1.200 0 1.200 3 0.800 4.500l3.700 6.500h-2.800l-1.700-3.500-1.700 3.500h-2.800l3.700-6.500c-0.400-1.500-0.400-4.500 0.800-4.500z" fill="#fff"/>
<path d="M1578.500 1057c1.200 0 1.200 3 0.800 4.500l3.700 6.500h-2.800l-1.700-3.500-1.700 3.500h-2.800l3.700-6.500c-0.400-1.500-0.400-4.500 0.800-4.500z" fill="#fff"/><circle cx="1583" cy="1063" r="4.500" fill="#f6ec7a" stroke="#e8d820" stroke-width="1"/><rect x="1581" y="1067.500" width="4" height="2.500" fill="#ddd"/>
<path d="M1600.500 1057c1.200 0 1.200 3 0.800 4.500l3.700 6.500h-2.800l-1.700-3.500-1.700 3.500h-2.800l3.700-6.500c-0.400-1.500-0.400-4.500 0.800-4.500z" fill="#fff"/><path d="M1607 1056l-3.500 5h2.500l-2 4 5-6h-2.500l2-3z" fill="#f0a020"/>
<g stroke="#ddd" stroke-width="1" fill="none"><path d="M1615.500 1056v16M1619.500 1056v16M1623.500 1056v16M1627.500 1056v16M1631.500 1056v16M1614 1057.500h18M1614 1061.500h18M1614 1065.500h18M1614 1069.500h18"/>
<path d="M1637.500 1056v16M1641.500 1056v16M1645.500 1056v16M1649.500 1056v16M1653.500 1056v16M1636 1057.500h18M1636 1061.500h18M1636 1065.500h18M1636 1069.500h18" stroke="#bbb"/></g>
<path d="M1614 1067.500h9M1618.500 1063v9" stroke="#e02020" stroke-width="1.200"/><rect x="1616.500" y="1065.500" width="4" height="4" fill="#444" stroke="#e02020"/><path d="M1615.500 1058v14" stroke="#20c020" stroke-width="1.200"/>
<path d="M1661.500 1056v15" stroke="#20c020" stroke-width="1.300"/><path d="M1661 1070.500h14" stroke="#e02020" stroke-width="1.300"/><path d="M1662 1063.500h6v7" fill="none" stroke="#fff" stroke-width="1.300"/>
<circle cx="1688.500" cy="1063.500" r="7" fill="none" stroke="#ddd" stroke-width="1.500"/><path d="M1696 1057l-8 6.500h8.500" fill="none" stroke="#e02020" stroke-width="1.300"/>
<path d="M1711.500 1056v16M1703 1062.500h17" stroke="#fff" stroke-width="1.300"/><rect x="1710" y="1061" width="3" height="3" fill="#fff" stroke="#e02020"/>
<path d="M1726 1071.500h14M1727 1071l13-14M1731 1059l5 6" stroke="#fff" stroke-width="1.300" fill="none"/>
<path d="M1755 1056v16M1747 1064h16" stroke="#fff" stroke-width="1.800"/>
<g transform="translate(1862 1063.500)"><path d="M-1.600 -8h3.200l0.500 2.300 1.500 0.600 2-1.300 2.200 2.200-1.300 2 0.600 1.500 2.300 0.500v3.200l-2.300 0.500-0.600 1.500 1.300 2-2.200 2.200-2-1.300-1.500 0.600-0.500 2.300h-3.200l-0.500-2.300-1.500-0.600-2 1.300-2.200-2.200 1.300-2-0.600-1.500-2.300-0.500v-3.200l2.300-0.500 0.600-1.500-1.300-2 2.200-2.200 2 1.300 1.500-0.600z" fill="#2a8ee6"/><circle r="2.600" fill="#343434"/></g>
<rect x="1877.500" y="1058.500" width="9" height="6.500" fill="#fff" stroke="#fff"/><rect x="1877" y="1058" width="10" height="2" fill="#2a60c0"/><rect x="1882.500" y="1063.500" width="9" height="6.500" fill="#fff" stroke="#fff"/><rect x="1882" y="1063" width="10" height="2" fill="#2a60c0"/>
<rect x="1899.500" y="1058.500" width="13" height="10" fill="#fbd46a" stroke="#e8b838"/><path d="M1899.500 1058.500l6.500 5.500 6.500-5.500M1899.500 1068.500l5-5M1912.500 1068.500l-5-5" fill="none" stroke="#fff7d8" stroke-width="1"/>
</svg>
<div style="left:4px;top:1074px;width:1912px;height:1px;background:#6a6a6a"></div>
</body></html>
